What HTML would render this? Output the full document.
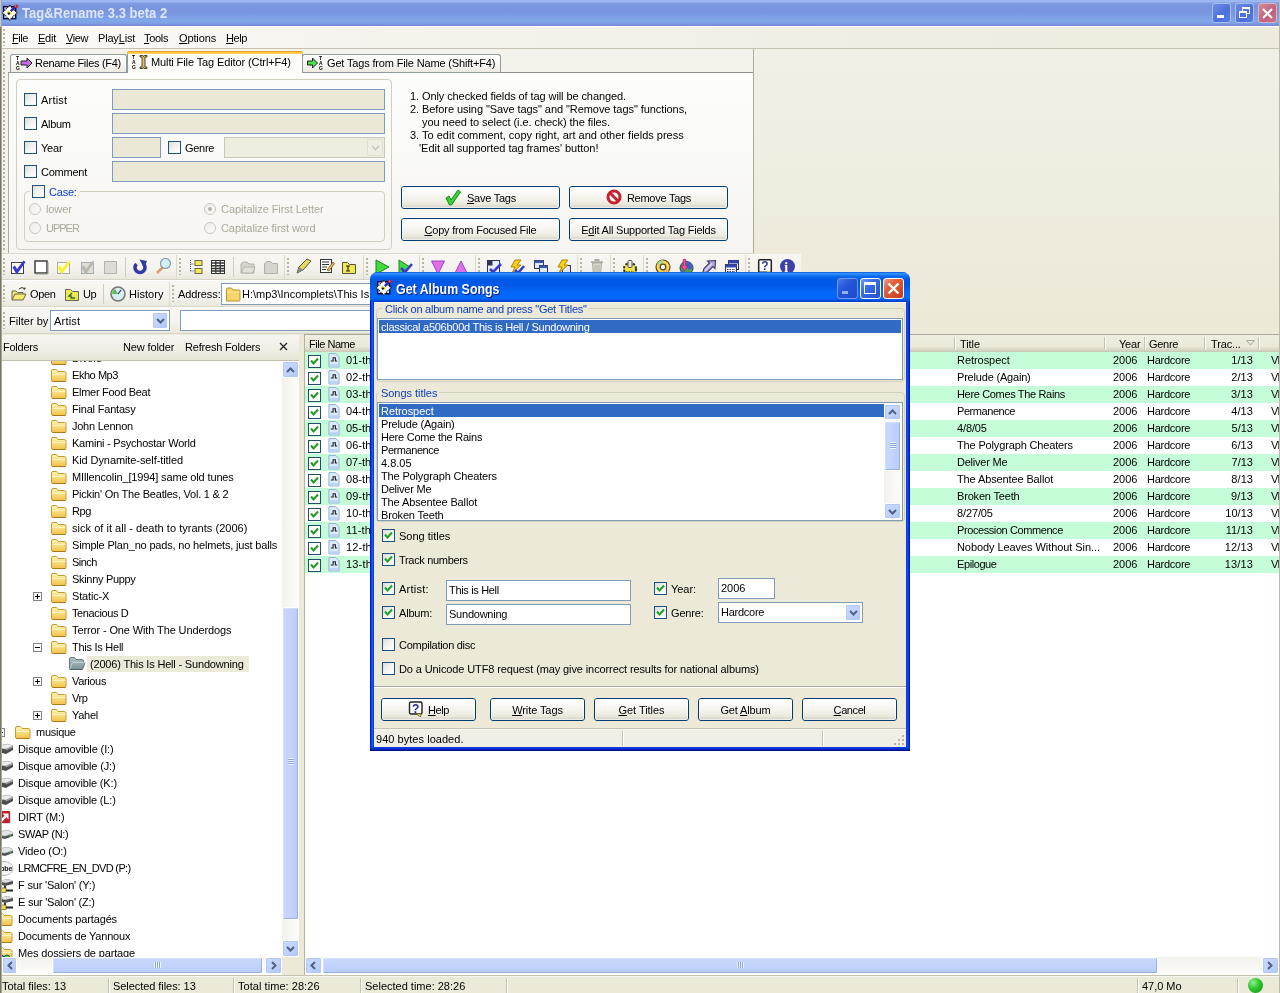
<!DOCTYPE html>
<html><head><meta charset="utf-8"><title>Tag&amp;Rename 3.3 beta 2</title>
<style>
*{box-sizing:border-box;margin:0;padding:0}
html,body{width:1280px;height:993px;overflow:hidden;background:#ece9d8}
body{position:relative;font:11px/13px "Liberation Sans",sans-serif;letter-spacing:-0.1px;color:#000;-webkit-font-smoothing:none}
.a{position:absolute}
.t{position:absolute;white-space:pre;line-height:13px;height:13px}
u{text-decoration:underline;text-underline-offset:1px}
.blue{color:#0a3cc4}
.dis{color:#aca899}
.cb{position:absolute;width:13px;height:13px;border:1px solid #1c5180;background:linear-gradient(135deg,#dcdcd7 0%,#f3f3ef 50%,#fff 100%)}
.cb svg{position:absolute;left:1px;top:1px}
.rb{position:absolute;width:12px;height:12px;border:1px solid #cac8bb;border-radius:50%;background:linear-gradient(135deg,#eeede6,#fbfbf9)}
.inp{position:absolute;border:1px solid #7f9db9;background:#fff}
.inpd{position:absolute;border:1px solid #7f9db9;background:#ebe8d7}
.btn{position:absolute;border:1px solid #003c74;border-radius:3px;background:linear-gradient(180deg,#fff 0%,#f6f5f0 45%,#eceade 80%,#d6d0c5 100%);text-align:center;line-height:23px;white-space:pre}
.btn:after{content:"";position:absolute;left:0;top:0;right:0;bottom:0;border-radius:2px;box-shadow:inset 0 0 0 1px rgba(255,255,255,.6)}
.grip{position:absolute;width:2px;background:linear-gradient(#b6b3a3 50%,transparent 50%) 0 0/2px 4px repeat-y}
.grip:after{content:'';position:absolute;left:1px;top:1px;width:2px;height:100%;background:linear-gradient(#fff 50%,transparent 50%) 0 0/2px 4px repeat-y;z-index:-1}
.sbtn{position:absolute;border:1px solid #fff;border-radius:2px;background:linear-gradient(135deg,#cbdafd 0%,#c1d3fc 50%,#b0c5f6 100%);box-shadow:inset 0 0 0 1px #b4c8f6}
.sbtn svg{position:absolute}
.thumb{position:absolute;border:1px solid #fff;border-radius:2px;box-shadow:inset -1px -1px 0 0 #98b1e4, inset 1px 1px 0 0 #d3e0fd}
.gb{position:absolute;border:1px solid #d0d0bf;border-radius:4px}
.ic{position:absolute;width:16px;height:16px}
#root{position:absolute;left:0;top:0;width:1280px;height:993px;will-change:transform}
</style></head><body><div id="root">
<!-- main window title bar (inactive) -->
<div class="a" style="left:0;top:0;width:1280px;height:26px;background:linear-gradient(180deg,#98b2ec 0%,#9fbaf4 5%,#86a2e2 11%,#7994de 21%,#7c97e0 50%,#7da0e6 65%,#80a8e8 82%,#7b9ae3 92%,#7585d0 100%)"></div>
<div class="a" style="left:0;top:26px;width:1280px;height:1px;background:#fff"></div>
<div class="a" style="left:0;top:0;width:2px;height:993px;background:linear-gradient(90deg,#77746a 0 1px,#aaa797 1px 2px)"></div>
<div class="a" style="left:0;top:0;width:1px;height:27px;background:#cfc9b6"></div><div class="a" style="left:1px;top:0;width:1px;height:26px;background:#8aa2e4"></div>
<div class="a" style="left:1279px;top:0;width:1px;height:993px;background:#bdbaab"></div>
<!-- app icon -->
<svg class="a" style="left:2px;top:4px" width="18" height="17" viewBox="0 0 18 17">
<rect x="1.700" y="2.700" width="12" height="12" fill="#cfe0fa" stroke="#0c0c34" stroke-width="1.400"/>
<path d="M7.700 1.400 L15 8.700 L7.700 16 L0.400 8.700 Z" fill="#fdfdfb" stroke="#111" stroke-width="1.100" stroke-dasharray="1.200 .8"/>
<path d="M5.500 7.500 L9.500 10" stroke="#e4da4c" stroke-width="2.400"/>
<circle cx="6.800" cy="9.600" r="1.200" fill="#111"/>
<path d="M8.800 7.200 L12.800 3.200" stroke="#2626b8" stroke-width="2.400"/>
<circle cx="14.200" cy="2.300" r="1.900" fill="#b82444"/><circle cx="13.600" cy="2" r=".6" fill="#f4c0c8"/>
</svg>
<div class="t" style="left:22px;top:5px;font:bold 14px/17px 'Liberation Sans',sans-serif;height:17px;color:#dde6f8;letter-spacing:0;transform-origin:0 0;transform:scaleX(.93)">Tag&amp;Rename 3.3 beta 2</div>
<!-- caption buttons -->
<div class="a" style="left:1212px;top:3px;width:19px;height:20px;border-radius:3px;border:1px solid #a9bdec;background:linear-gradient(135deg,#6f8ce2 0%,#4b6fdc 60%,#5b7de0 100%)"><div class="a" style="left:4px;top:11px;width:7px;height:3px;background:#fff"></div></div>
<div class="a" style="left:1235px;top:3px;width:19px;height:20px;border-radius:3px;border:1px solid #a9bdec;background:linear-gradient(135deg,#6f8ce2 0%,#4b6fdc 60%,#5b7de0 100%)">
<div class="a" style="left:6px;top:3px;width:8px;height:7px;border:1px solid #fff;border-top-width:2px"></div>
<div class="a" style="left:3px;top:7px;width:8px;height:7px;border:1px solid #fff;border-top-width:2px;background:#5172dc"></div></div>
<div class="a" style="left:1258px;top:3px;width:19px;height:20px;border-radius:3px;border:1px solid #d9b3c4;background:linear-gradient(135deg,#d08a9a 0%,#c0637a 60%,#c87488 100%)">
<svg class="a" style="left:2px;top:3px" width="13" height="13" viewBox="0 0 13 13"><path d="M2 2 L11 11 M11 2 L2 11" stroke="#fff" stroke-width="2"/></svg></div>
<!-- menu bar -->
<div class="a" style="left:2px;top:27px;width:1277px;height:21px;background:linear-gradient(90deg,#fbfaf7 0%,#f5f3ec 30%,#f0eee3 70%,#eeebde 100%)"></div>
<div class="a" style="left:2px;top:48px;width:1277px;height:1px;background:#c5c2b2"></div>
<div class="grip" style="left:3px;top:29px;height:17px"></div>
<div class="t" style="left:12px;top:32px;letter-spacing:-0.43px"><u>F</u>ile</div>
<div class="t" style="left:38px;top:32px;letter-spacing:-0.25px"><u>E</u>dit</div>
<div class="t" style="left:66px;top:32px;letter-spacing:-0.42px"><u>V</u>iew</div>
<div class="t" style="left:98px;top:32px;letter-spacing:-0.18px">Play<u>L</u>ist</div>
<div class="t" style="left:144px;top:32px;letter-spacing:-0.31px"><u>T</u>ools</div>
<div class="t" style="left:179px;top:32px;letter-spacing:-0.13px"><u>O</u>ptions</div>
<div class="t" style="left:226px;top:32px;letter-spacing:-0.43px"><u>H</u>elp</div>
<!-- top panel area -->
<div class="a" style="left:2px;top:49px;width:1277px;height:286px;background:linear-gradient(180deg,#f2f0e6 0%,#efece0 50%,#ece9d8 100%)"></div>
<div class="a" style="left:2px;top:49px;width:751px;height:205px;background:#f3f2eb"></div>
<div class="grip" style="left:3px;top:52px;height:198px"></div>
<!-- tab page -->
<div class="a" style="left:753px;top:49px;width:1px;height:205px;background:#aeab9c"></div>
<div class="a" style="left:8px;top:72px;width:745px;height:182px;border:1px solid #a9aca6;border-right:none;border-top-color:#8e8f86;background:linear-gradient(180deg,#fdfdfc 0%,#f6f5f1 100%)"></div>
<!-- tabs -->
<div class="a" style="left:10px;top:54px;width:117px;height:19px;border:1px solid #919b9c;border-bottom:none;border-radius:3px 3px 0 0;background:linear-gradient(180deg,#fff 0%,#f5f4ef 60%,#ebe9de 100%)"></div>
<div class="a" style="left:302px;top:54px;width:199px;height:19px;border:1px solid #919b9c;border-bottom:none;border-radius:3px 3px 0 0;background:linear-gradient(180deg,#fff 0%,#f5f4ef 60%,#ebe9de 100%)"></div>
<div class="a" style="left:10px;top:72px;width:117px;height:1px;background:#919b9c"></div>
<div class="a" style="left:302px;top:72px;width:199px;height:1px;background:#919b9c"></div>
<div class="a" style="left:127px;top:51px;width:176px;height:22px;border:1px solid #919b9c;border-bottom:none;border-top:none;border-radius:3px 3px 0 0;background:#fcfcfb"></div>
<div class="a" style="left:127px;top:51px;width:176px;height:3px;border-radius:3px 3px 0 0;background:linear-gradient(180deg,#e68b2c 0%,#ffc73c 50%,#ffd680 100%)"></div>
<!-- tab icons + labels -->
<svg class="a" style="left:16px;top:55px" width="18" height="16" viewBox="0 0 18 16"><text x="0" y="5" font-size="5" font-weight="bold" font-family="Liberation Sans, sans-serif">T</text><text x="0" y="10" font-size="5" font-weight="bold" font-family="Liberation Sans, sans-serif">A</text><text x="0" y="15" font-size="5" font-weight="bold" font-family="Liberation Sans, sans-serif">G</text><path d="M5 6 h6 v-3 l5 5 l-5 5 v-3 h-6 z" fill="#c86ae6" stroke="#222" stroke-width="1"/></svg>
<div class="t" style="left:35px;top:57px;letter-spacing:-0.31px">Rename Files (F4)</div>
<svg class="a" style="left:132px;top:54px" width="18" height="16" viewBox="0 0 18 16"><text x="0" y="5" font-size="5" font-weight="bold" font-family="Liberation Sans, sans-serif">T</text><text x="0" y="10" font-size="5" font-weight="bold" font-family="Liberation Sans, sans-serif">A</text><text x="0" y="15" font-size="5" font-weight="bold" font-family="Liberation Sans, sans-serif">G</text><path d="M8 1.5 h2 q1.5 0 1.5 1 q0 -1 1.5 -1 h2 v1.5 h-2 v10 h2 v1.5 h-2 q-1.500 0 -1.500 -1 q0 1 -1.500 1 h-2 v-1.500 h2 v-10 h-2 z" fill="#e8c060" stroke="#222" stroke-width=".8"/></svg>
<div class="t" style="left:151px;top:56px;letter-spacing:-0.11px">Multi File Tag Editor (Ctrl+F4)</div>
<svg class="a" style="left:307px;top:55px" width="18" height="16" viewBox="0 0 18 16"><path d="M0.500 6 h5 v-3 l5 5 l-5 5 v-3 h-5 z" fill="#4ce04c" stroke="#222" stroke-width="1"/><text x="12" y="5" font-size="5" font-weight="bold" font-family="Liberation Sans, sans-serif">T</text><text x="12" y="10" font-size="5" font-weight="bold" font-family="Liberation Sans, sans-serif">A</text><text x="12" y="15" font-size="5" font-weight="bold" font-family="Liberation Sans, sans-serif">G</text></svg>
<div class="t" style="left:327px;top:57px;letter-spacing:-0.16px">Get Tags from File Name (Shift+F4)</div>
<!-- tag editor group -->
<div class="gb" style="left:16px;top:79px;width:376px;height:171px"></div>
<div class="cb" style="left:24px;top:93px"></div><div class="t" style="left:41px;top:94px;letter-spacing:0.20px">Artist</div>
<div class="inpd" style="left:112px;top:89px;width:273px;height:21px"></div>
<div class="cb" style="left:24px;top:117px"></div><div class="t" style="left:41px;top:118px;letter-spacing:-0.32px">Album</div>
<div class="inpd" style="left:112px;top:113px;width:273px;height:21px"></div>
<div class="cb" style="left:24px;top:141px"></div><div class="t" style="left:41px;top:142px;letter-spacing:-0.21px">Year</div>
<div class="inpd" style="left:112px;top:137px;width:49px;height:21px"></div>
<div class="cb" style="left:168px;top:141px"></div><div class="t" style="left:185px;top:142px;letter-spacing:-0.29px">Genre</div>
<div class="inpd" style="left:224px;top:137px;width:161px;height:21px;border-color:#c9c7ba;background:#efeddf"></div>
<div class="a" style="left:367px;top:139px;width:16px;height:17px;border:1px solid #e1dfd3;border-radius:2px;background:#f0eee3"><svg class="a" style="left:3px;top:5px" width="9" height="6" viewBox="0 0 9 6"><path d="M1 1 L4.500 4.500 L8 1" fill="none" stroke="#c9c7ba" stroke-width="1.600"/></svg></div>
<div class="cb" style="left:24px;top:165px"></div><div class="t" style="left:41px;top:166px;letter-spacing:-0.24px">Comment</div>
<div class="inpd" style="left:112px;top:161px;width:273px;height:21px"></div>
<!-- case group -->
<div class="gb" style="left:24px;top:191px;width:361px;height:51px"></div>
<div class="a" style="left:30px;top:185px;width:50px;height:13px;background:#f8f7f4"></div>
<div class="cb" style="left:32px;top:185px"></div><div class="t blue" style="left:49px;top:186px;letter-spacing:-0.21px">Case:</div>
<div class="rb" style="left:29px;top:203px"></div><div class="t dis" style="left:46px;top:203px;letter-spacing:-0.12px">lower</div>
<div class="rb" style="left:29px;top:222px"></div><div class="t dis" style="left:46px;top:222px;letter-spacing:-1.01px">UPPER</div>
<div class="rb" style="left:204px;top:203px"><div class="a" style="left:3px;top:3px;width:4px;height:4px;border-radius:50%;background:#b5b3a6"></div></div><div class="t dis" style="left:221px;top:203px;letter-spacing:-0.06px">Capitalize First Letter</div>
<div class="rb" style="left:204px;top:222px"></div><div class="t dis" style="left:221px;top:222px;letter-spacing:-0.07px">Capitalize first word</div>
<!-- help text -->
<div class="t" style="left:410px;top:90px;letter-spacing:-0.09px">1. Only checked fields of tag will be changed.</div>
<div class="t" style="left:410px;top:103px;letter-spacing:-0.07px">2. Before using "Save tags" and "Remove tags" functions,</div>
<div class="t" style="left:410px;top:116px;letter-spacing:-0.05px">    you need to select (i.e. check) the files.</div>
<div class="t" style="left:410px;top:129px;letter-spacing:0.00px">3. To edit comment, copy right, art and other fields press</div>
<div class="t" style="left:410px;top:142px;letter-spacing:-0.04px">   'Edit all supported tag frames' button!</div>
<!-- buttons -->
<div class="btn" style="left:401px;top:186px;width:159px;height:23px;letter-spacing:-0.24px"><svg style="vertical-align:-4px;margin-right:6px" width="16" height="17" viewBox="0 0 16 17"><path d="M1 9 L4 7 L6 11 L13 1 L15.500 3 L6.500 16 L4.500 16 Z" fill="#36d236" stroke="#1a8a1a" stroke-width="1"/></svg><u>S</u>ave Tags</div>
<div class="btn" style="left:569px;top:186px;width:159px;height:23px;letter-spacing:-0.26px"><svg style="vertical-align:-3px;margin-right:5px" width="16" height="16" viewBox="0 0 16 16"><circle cx="8" cy="8" r="6" fill="#fff" stroke="#c8202c" stroke-width="3"/><path d="M4 4 L12 12" stroke="#c8202c" stroke-width="3"/></svg>Remove Tags</div>
<div class="btn" style="left:401px;top:218px;width:159px;height:23px;letter-spacing:-0.22px"><u>C</u>opy from Focused File</div>
<div class="btn" style="left:569px;top:218px;width:159px;height:23px;letter-spacing:-0.20px">E<u>d</u>it All Supported Tag Fields</div>
<!-- toolbar 1 -->
<div class="a" style="left:2px;top:254px;width:799px;height:26px;background:linear-gradient(180deg,#f8f7f3 0%,#f3f2ec 60%,#e9e7dc 100%)"></div>
<div class="a" style="left:2px;top:279px;width:900px;height:1px;background:#d8d5c6"></div>
<div class="a" style="left:2px;top:280px;width:900px;height:1px;background:#fff"></div>
<div class="a" style="left:2px;top:253px;width:752px;height:1px;background:#dcd9cb"></div>
<div class="grip" style="left:3px;top:258px;height:17px"></div>
<div class="grip" style="left:179px;top:258px;height:17px"></div>
<div class="grip" style="left:287px;top:258px;height:17px"></div>
<div class="grip" style="left:366px;top:258px;height:17px"></div>
<div class="grip" style="left:422px;top:258px;height:17px"></div>
<div class="grip" style="left:478px;top:258px;height:17px"></div>
<div class="grip" style="left:580px;top:258px;height:17px"></div>
<div class="grip" style="left:613px;top:258px;height:17px"></div>
<div class="grip" style="left:646px;top:258px;height:17px"></div>
<div class="grip" style="left:748px;top:258px;height:17px"></div>
<div class="a" style="left:125px;top:257px;width:1px;height:20px;background:#cfccbd"></div>
<div class="a" style="left:233px;top:257px;width:1px;height:20px;background:#cfccbd"></div>
<div class="a" style="left:176px;top:255px;width:1px;height:24px;background:#dddacb"></div>
<div class="a" style="left:284px;top:255px;width:1px;height:24px;background:#dddacb"></div>
<div class="a" style="left:363px;top:255px;width:1px;height:24px;background:#dddacb"></div>
<div class="a" style="left:419px;top:255px;width:1px;height:24px;background:#dddacb"></div>
<div class="a" style="left:475px;top:255px;width:1px;height:24px;background:#dddacb"></div>
<div class="a" style="left:577px;top:255px;width:1px;height:24px;background:#dddacb"></div>
<div class="a" style="left:610px;top:255px;width:1px;height:24px;background:#dddacb"></div>
<div class="a" style="left:643px;top:255px;width:1px;height:24px;background:#dddacb"></div>
<div class="a" style="left:745px;top:255px;width:1px;height:24px;background:#dddacb"></div>
<!-- tb1 icons -->
<svg class="ic" style="left:10px;top:259px" viewBox="0 0 16 16"><rect x="1.500" y="3.500" width="12" height="11" fill="#fff" stroke="#444" /><path d="M2.500 8.500 L5 6.500 L7 10 L13.500 1.500 L15.500 3 L7.500 14.500 L6 14.500 Z" fill="#3a3ad4"/></svg>
<svg class="ic" style="left:33px;top:259px" viewBox="0 0 16 16"><rect x="2" y="2" width="12" height="12" fill="#fff" stroke="#333" stroke-width="1.400"/><path d="M3 15 h12 v-12" fill="none" stroke="#999" stroke-width="1"/></svg>
<svg class="ic" style="left:55px;top:259px" viewBox="0 0 16 16"><rect x="2.500" y="3.500" width="12" height="11" fill="#fdfde8" stroke="#aaa"/><path d="M2.500 8.500 L5 6.500 L7 10 L13.500 1.500 L15.500 3 L7.500 14.500 L6 14.500 Z" fill="#f4f430"/></svg>
<svg class="ic" style="left:79px;top:259px" viewBox="0 0 16 16"><rect x="2.500" y="3.500" width="12" height="11" fill="#deddd6" stroke="#aaa"/><path d="M2.500 8.500 L5 6.500 L7 10 L13.500 1.500 L15.500 3 L7.500 14.500 L6 14.500 Z" fill="#b8b7ae"/></svg>
<svg class="ic" style="left:102px;top:259px" viewBox="0 0 16 16"><rect x="2.500" y="2.500" width="12" height="12" fill="#dcdbd5" stroke="#b5b4ac"/></svg>
<svg class="ic" style="left:132px;top:259px" viewBox="0 0 16 16"><path d="M4.500 5 A5 5 0 1 0 11.500 5" fill="none" stroke="#3238a8" stroke-width="3.600"/><path d="M7.500 0.500 L15 2 L12 9 Z" fill="#3238a8"/></svg>
<svg class="ic" style="left:155px;top:258px" viewBox="0 0 16 16"><path d="M2 15 L8 9" stroke="#d8a070" stroke-width="2.600"/><circle cx="10.500" cy="5.500" r="5" fill="#d4f0fa" stroke="#8a9ab0" stroke-width="1.200"/></svg>
<svg class="ic" style="left:188px;top:259px" viewBox="0 0 16 16"><path d="M2.500 1 v11 M2.500 5 h4 M2.500 12 h4" stroke="#555" stroke-dasharray="1 1" fill="none"/><rect x="7" y="1.500" width="7" height="5" fill="#f0e850" stroke="#665"/><rect x="7" y="9.500" width="7" height="5" fill="#f0e850" stroke="#665"/></svg>
<svg class="ic" style="left:210px;top:259px" viewBox="0 0 16 16"><rect x="1.500" y="1.500" width="13" height="13" fill="#fff" stroke="#333"/><path d="M1 4 h14 M1 6.700 h14 M1 9.400 h14 M1 12.100 h14" stroke="#333" stroke-width="1.500"/><path d="M5.800 1 v14 M10.200 1 v14" stroke="#333" stroke-width="1.200"/></svg>
<svg class="ic" style="left:240px;top:259px" viewBox="0 0 16 16"><path d="M1 14 v-9 l2 -2 h4 l2 2 h5 v9 z" fill="#d6d4cc" stroke="#b2b0a6"/><path d="M1 14 l3 -6 h11 l-2 6 z" fill="#e2e0d8" stroke="#b2b0a6"/></svg>
<svg class="ic" style="left:263px;top:259px" viewBox="0 0 16 16"><path d="M1.500 14.500 v-10 l2 -2 h4 l2 2 h5 v10 z" fill="#d6d4cc" stroke="#b2b0a6"/></svg>
<svg class="ic" style="left:296px;top:258px" viewBox="0 0 16 16"><path d="M1 15 L3 9 L11 1 L15 3 L7 12 Z" fill="#e8d860" stroke="#554" stroke-width="1"/><path d="M1 15 L3 9 L7 12 Z" fill="#888"/></svg>
<svg class="ic" style="left:319px;top:258px" viewBox="0 0 16 16"><rect x="1.500" y="1.500" width="11" height="13" fill="#fff" stroke="#333"/><path d="M3 4 h7 M3 6.500 h7 M3 9 h5 M3 11.500 h4" stroke="#333"/><path d="M8 12 L14 4 L15.500 5.500 L10 13 Z" fill="#f0c040" stroke="#543" stroke-width=".7"/></svg>
<svg class="ic" style="left:341px;top:259px" viewBox="0 0 16 16"><path d="M1.500 14.500 v-11 h5 l2 2 h6 v9 z" fill="#f0e850" stroke="#554"/><path d="M5 7 h4 M7 7 v5 M5 12 h4" stroke="#222" stroke-width="1.200"/></svg>
<svg class="ic" style="left:374px;top:259px" viewBox="0 0 16 16"><path d="M2 1 L15 8 L2 15 Z" fill="#40d840" stroke="#1a8a1a"/></svg>
<svg class="ic" style="left:397px;top:259px" viewBox="0 0 16 16"><path d="M2 1 L13 8 L2 15 Z" fill="#40d840" stroke="#1a8a1a"/><path d="M4 9 L8 13 L15 5" fill="none" stroke="#3a3ad0" stroke-width="2.600"/></svg>
<svg class="ic" style="left:430px;top:259px" viewBox="0 0 16 16"><path d="M1.500 2 H14.500 L8 15 Z" fill="#e070e8" stroke="#94c"/></svg>
<svg class="ic" style="left:453px;top:259px" viewBox="0 0 16 16"><path d="M1.500 15 H14.500 L8 2 Z" fill="#e070e8" stroke="#94c"/></svg>
<svg class="ic" style="left:486px;top:259px" viewBox="0 0 16 16"><rect x="1.500" y="1.500" width="12" height="12" fill="#e8eefc" stroke="#335"/><rect x="1.500" y="1.500" width="5" height="5" fill="#335"/><path d="M4 10 L7 13 L15 5" fill="none" stroke="#3a3ad0" stroke-width="2.600"/></svg>
<svg class="ic" style="left:509px;top:259px" viewBox="0 0 16 16"><path d="M6 1 L12 1 L8 6 L12 6 L3 14 L6 8 L2 8 Z" fill="#f8d020" stroke="#a80"/><path d="M6 11 L9 14 L15 7" fill="none" stroke="#3a3ad0" stroke-width="2.600"/></svg>
<svg class="ic" style="left:533px;top:259px" viewBox="0 0 16 16"><rect x="1.500" y="1.500" width="9" height="8" fill="#dde8fa" stroke="#335"/><rect x="1.500" y="1.500" width="9" height="2.500" fill="#3a55b0"/><rect x="6.500" y="6.500" width="8" height="8" fill="#dde8fa" stroke="#335"/><rect x="6.500" y="6.500" width="8" height="2.500" fill="#3a55b0"/></svg>
<svg class="ic" style="left:556px;top:259px" viewBox="0 0 16 16"><rect x="6.500" y="6.500" width="8" height="8" fill="#dde8fa" stroke="#335"/><path d="M6 1 L12 1 L8 6 L12 6 L3 14 L6 8 L2 8 Z" fill="#f8d020" stroke="#a80"/></svg>
<svg class="ic" style="left:589px;top:258px" viewBox="0 0 16 16"><path d="M3.500 5 h9 l-.8 10.500 h-7.400 z" fill="#d8d6ce" stroke="#aeaca2"/><path d="M2 4.200 h12 M5.500 2 h5" stroke="#aeaca2" stroke-width="1.800"/><path d="M6 7 v7 M8 7 v7 M10 7 v7" stroke="#b4b2a8"/></svg>
<svg class="ic" style="left:622px;top:259px" viewBox="0 0 16 16"><circle cx="8" cy="10" r="6" fill="#f0e448" stroke="#3a3a20" stroke-dasharray="2.400 1.400" stroke-width="2.200"/><circle cx="8" cy="10" r="4.800" fill="#f0e448"/><rect x="6" y="1.500" width="4" height="7" rx="1" fill="#e8e8e8" stroke="#555"/><path d="M4 12.500 h8" stroke="#7a7420" stroke-dasharray="1.500 1"/></svg>
<svg class="ic" style="left:655px;top:259px" viewBox="0 0 16 16"><circle cx="8" cy="8" r="7" fill="#f6d458" stroke="#5a4a18" stroke-width="1.200"/><path d="M8 8 L2 4.500 A7 7 0 0 1 8 1 Z" fill="#a8dc88"/><path d="M8 8 L14 11.500 A7 7 0 0 1 8 15 Z" fill="#f4b860"/><circle cx="8" cy="8" r="2.800" fill="#f4f4f4" stroke="#5a4a18" stroke-width="1.200"/></svg>
<svg class="ic" style="left:678px;top:259px" viewBox="0 0 16 16"><circle cx="8.500" cy="9" r="6.500" fill="#4aa84a" stroke="#223a5a"/><path d="M8.500 2.500 a6.500 6.500 0 0 1 6.500 6.500 l-4 2 l-2.500 -3 z" fill="#4460c8"/><path d="M3 12 l3 1 l1 2.400" fill="none" stroke="#4460c8" stroke-width="2"/><path d="M5.200 0.500 v6.500 h-2.400 l3.700 5 l3.700 -5 h-2.400 v-6.500 z" fill="#ee50a0" stroke="#a02468" stroke-width=".8"/></svg>
<svg class="ic" style="left:701px;top:259px" viewBox="0 0 16 16"><path d="M1.500 14.500 L3 9.500 L8.500 4 L6.500 2 L14.500 1.500 L14 9.500 L12 7.500 L6.500 13 Z" fill="#b4a4ea" stroke="#3c3c5c" stroke-width="1.100"/><path d="M4 11.500 L11 4.500" stroke="#dcd4f8" stroke-width="1.400"/></svg>
<svg class="ic" style="left:724px;top:259px" viewBox="0 0 16 16"><rect x="4.500" y="1.500" width="10" height="9" fill="#fff" stroke="#336"/><rect x="4.500" y="1.500" width="10" height="3" fill="#3346b0"/><rect x="1.500" y="5.500" width="11" height="9" fill="#fff" stroke="#336"/><rect x="1.500" y="5.500" width="11" height="3" fill="#3346b0"/><path d="M3 10.500 h8 M3 12.500 h8" stroke="#336" stroke-dasharray="1.500 1"/></svg>
<svg class="ic" style="left:757px;top:258px" viewBox="0 0 16 16"><rect x="1.700" y="1.700" width="12.600" height="12.600" rx="1" fill="#fff" stroke="#222" stroke-width="1.500"/><text x="4.300" y="12.300" font-size="12" font-weight="bold" fill="#34349c" font-family="Liberation Sans, sans-serif">?</text><path d="M9.500 13.500 l3 2.500 l.5 -3 z" fill="#f4ec60"/></svg>
<svg class="ic" style="left:779px;top:258px" viewBox="0 0 16 16"><circle cx="8.500" cy="8.500" r="7.500" fill="#3c40a8"/><text x="5.300" y="14" font-size="14" font-weight="bold" fill="#fff" font-family="Liberation Serif, serif">i</text></svg>
<!-- toolbar 2 -->
<div class="a" style="left:2px;top:281px;width:900px;height:26px;background:linear-gradient(180deg,#f8f7f3 0%,#f3f2ec 60%,#e9e7dc 100%)"></div>
<div class="a" style="left:2px;top:306px;width:900px;height:1px;background:#d8d5c6"></div>
<div class="a" style="left:2px;top:307px;width:900px;height:1px;background:#fff"></div>
<div class="grip" style="left:3px;top:285px;height:17px"></div>
<div class="grip" style="left:172px;top:285px;height:17px"></div>
<div class="a" style="left:169px;top:282px;width:1px;height:24px;background:#dddacb"></div>
<div class="a" style="left:103px;top:284px;width:1px;height:20px;background:#cfccbd"></div>
<svg class="ic" style="left:11px;top:286px" viewBox="0 0 16 16"><path d="M1 14 v-9 h4 l1.500 1.500 h5.500 v2" fill="#f4ec70" stroke="#665"/><path d="M1 14 l3 -6 h11 l-3 6 z" fill="#f4ec70" stroke="#665"/><path d="M8 3 q3 -3 6 0 l-1.500 0 m1.500 0 l0 -1.500" fill="none" stroke="#333"/></svg>
<div class="t" style="left:30px;top:288px;letter-spacing:-0.33px">Open</div>
<svg class="ic" style="left:64px;top:286px" viewBox="0 0 16 16"><path d="M1.500 14.500 v-11 h5 l2 2 h6 v9 z" fill="#f0e850" stroke="#665"/><path d="M8 7 l-3 3 h2 v2 h4" fill="none" stroke="#363" stroke-width="1.300"/></svg>
<div class="t" style="left:83px;top:288px;letter-spacing:-0.32px">Up</div>
<svg class="ic" style="left:110px;top:286px" viewBox="0 0 16 16"><circle cx="8" cy="8" r="7" fill="#d8eef0" stroke="#777" stroke-width="1.600"/><path d="M8 8 L2 8 A6 6 0 0 1 5 3 Z" fill="#50c050"/><path d="M8 8 L11 4" stroke="#335" stroke-width="1.200"/></svg>
<div class="t" style="left:129px;top:288px;letter-spacing:0.03px">History</div>
<div class="t" style="left:178px;top:288px;letter-spacing:-0.10px">Address:</div>
<div class="inp" style="left:221px;top:283px;width:671px;height:22px"></div>
<svg class="ic" style="left:225px;top:286px" viewBox="0 0 16 16"><path d="M1.500 14 v-11 q0 -1 1 -1 h4 l1.500 2 h6 q1 0 1 1 v9 q0 1 -1 1 h-12.500z" fill="#f6d66a" stroke="#b8902a"/><path d="M2 6 h12.500" stroke="#fbe9a0"/></svg>
<div class="t" style="left:242px;top:288px;letter-spacing:0.00px">H:\mp3\Incomplets\This Is</div>
<!-- filter bar -->
<div class="a" style="left:2px;top:308px;width:900px;height:26px;background:linear-gradient(180deg,#f8f7f3 0%,#f3f2ec 60%,#e9e7dc 100%)"></div>
<div class="a" style="left:2px;top:333px;width:900px;height:1px;background:#d8d5c6"></div>
<div class="grip" style="left:3px;top:312px;height:17px"></div>
<div class="t" style="left:9px;top:315px;letter-spacing:0.03px">Filter by</div>
<div class="inp" style="left:50px;top:310px;width:120px;height:21px"></div>
<div class="t" style="left:54px;top:315px;letter-spacing:0.20px">Artist</div>
<div class="sbtn" style="left:152px;top:312px;width:16px;height:17px"><svg style="left:3px;top:5px" width="9" height="6" viewBox="0 0 9 6"><path d="M1 1 L4.500 4.500 L8 1" fill="none" stroke="#4d6185" stroke-width="2"/></svg></div>
<div class="inp" style="left:180px;top:310px;width:712px;height:21px"></div>
<!-- folders panel -->
<svg width="0" height="0" style="position:absolute"><defs><linearGradient id="fg" x1="0" y1="0" x2="0" y2="1"><stop offset="0" stop-color="#fef6b8"/><stop offset="1" stop-color="#f2c248"/></linearGradient><linearGradient id="gg" x1="0" y1="0" x2="0" y2="1"><stop offset="0" stop-color="#b4c3c6"/><stop offset="1" stop-color="#7c9296"/></linearGradient></defs></svg>
<div class="a" style="left:2px;top:360px;width:297px;height:615px;background:#fff;overflow:hidden" id="tree">
<svg class="a" style="left:49px;top:-8px" width="16" height="13" viewBox="0 0 16 13"><path d="M.5 11 V2 q0-1.500 1.500-1.500 h3 q1 0 1.500 1 l.5 1 h6.500 q1.500 0 1.500 1.500 v7 q0 1.500-1.500 1.500 h-11.500 q-1.500 0-1.500-1.500z" fill="url(#fg)" stroke="#c59a35"/><path d="M1.500 5.500 h13" stroke="#fff8d0" opacity=".8"/><path d="M1.500 12.500 h13" stroke="#a67a1e"/></svg>
<div class="t" style="left:70px;top:-8px;letter-spacing:-0.22px">Divers</div>
<svg class="a" style="left:49px;top:9px" width="16" height="13" viewBox="0 0 16 13"><path d="M.5 11 V2 q0-1.500 1.500-1.500 h3 q1 0 1.500 1 l.5 1 h6.500 q1.500 0 1.500 1.500 v7 q0 1.500-1.500 1.500 h-11.500 q-1.500 0-1.500-1.500z" fill="url(#fg)" stroke="#c59a35"/><path d="M1.500 5.500 h13" stroke="#fff8d0" opacity=".8"/><path d="M1.500 12.500 h13" stroke="#a67a1e"/></svg>
<div class="t" style="left:70px;top:9px;letter-spacing:-0.45px">Ekho Mp3</div>
<svg class="a" style="left:49px;top:26px" width="16" height="13" viewBox="0 0 16 13"><path d="M.5 11 V2 q0-1.500 1.500-1.500 h3 q1 0 1.500 1 l.5 1 h6.500 q1.500 0 1.500 1.500 v7 q0 1.500-1.500 1.500 h-11.500 q-1.500 0-1.500-1.500z" fill="url(#fg)" stroke="#c59a35"/><path d="M1.500 5.500 h13" stroke="#fff8d0" opacity=".8"/><path d="M1.500 12.500 h13" stroke="#a67a1e"/></svg>
<div class="t" style="left:70px;top:26px;letter-spacing:-0.29px">Elmer Food Beat</div>
<svg class="a" style="left:49px;top:43px" width="16" height="13" viewBox="0 0 16 13"><path d="M.5 11 V2 q0-1.500 1.500-1.500 h3 q1 0 1.500 1 l.5 1 h6.500 q1.500 0 1.500 1.500 v7 q0 1.500-1.500 1.500 h-11.500 q-1.500 0-1.500-1.500z" fill="url(#fg)" stroke="#c59a35"/><path d="M1.500 5.500 h13" stroke="#fff8d0" opacity=".8"/><path d="M1.500 12.500 h13" stroke="#a67a1e"/></svg>
<div class="t" style="left:70px;top:43px;letter-spacing:-0.20px">Final Fantasy</div>
<svg class="a" style="left:49px;top:60px" width="16" height="13" viewBox="0 0 16 13"><path d="M.5 11 V2 q0-1.500 1.500-1.500 h3 q1 0 1.500 1 l.5 1 h6.500 q1.500 0 1.500 1.500 v7 q0 1.500-1.500 1.500 h-11.500 q-1.500 0-1.500-1.500z" fill="url(#fg)" stroke="#c59a35"/><path d="M1.500 5.500 h13" stroke="#fff8d0" opacity=".8"/><path d="M1.500 12.500 h13" stroke="#a67a1e"/></svg>
<div class="t" style="left:70px;top:60px;letter-spacing:-0.25px">John Lennon</div>
<svg class="a" style="left:49px;top:77px" width="16" height="13" viewBox="0 0 16 13"><path d="M.5 11 V2 q0-1.500 1.500-1.500 h3 q1 0 1.500 1 l.5 1 h6.500 q1.500 0 1.500 1.500 v7 q0 1.500-1.500 1.500 h-11.500 q-1.500 0-1.500-1.500z" fill="url(#fg)" stroke="#c59a35"/><path d="M1.500 5.500 h13" stroke="#fff8d0" opacity=".8"/><path d="M1.500 12.500 h13" stroke="#a67a1e"/></svg>
<div class="t" style="left:70px;top:77px;letter-spacing:-0.23px">Kamini - Psychostar World</div>
<svg class="a" style="left:49px;top:94px" width="16" height="13" viewBox="0 0 16 13"><path d="M.5 11 V2 q0-1.500 1.500-1.500 h3 q1 0 1.500 1 l.5 1 h6.500 q1.500 0 1.500 1.500 v7 q0 1.500-1.500 1.500 h-11.500 q-1.500 0-1.500-1.500z" fill="url(#fg)" stroke="#c59a35"/><path d="M1.500 5.500 h13" stroke="#fff8d0" opacity=".8"/><path d="M1.500 12.500 h13" stroke="#a67a1e"/></svg>
<div class="t" style="left:70px;top:94px;letter-spacing:-0.09px">Kid Dynamite-self-titled</div>
<svg class="a" style="left:49px;top:111px" width="16" height="13" viewBox="0 0 16 13"><path d="M.5 11 V2 q0-1.500 1.500-1.500 h3 q1 0 1.500 1 l.5 1 h6.500 q1.500 0 1.500 1.500 v7 q0 1.500-1.500 1.500 h-11.500 q-1.500 0-1.500-1.500z" fill="url(#fg)" stroke="#c59a35"/><path d="M1.500 5.500 h13" stroke="#fff8d0" opacity=".8"/><path d="M1.500 12.500 h13" stroke="#a67a1e"/></svg>
<div class="t" style="left:70px;top:111px;letter-spacing:-0.14px">MIllencolin_[1994] same old tunes</div>
<svg class="a" style="left:49px;top:128px" width="16" height="13" viewBox="0 0 16 13"><path d="M.5 11 V2 q0-1.500 1.500-1.500 h3 q1 0 1.500 1 l.5 1 h6.500 q1.500 0 1.500 1.500 v7 q0 1.500-1.500 1.500 h-11.500 q-1.500 0-1.500-1.500z" fill="url(#fg)" stroke="#c59a35"/><path d="M1.500 5.500 h13" stroke="#fff8d0" opacity=".8"/><path d="M1.500 12.500 h13" stroke="#a67a1e"/></svg>
<div class="t" style="left:70px;top:128px;letter-spacing:-0.22px">Pickin' On The Beatles, Vol. 1 &amp; 2</div>
<svg class="a" style="left:49px;top:145px" width="16" height="13" viewBox="0 0 16 13"><path d="M.5 11 V2 q0-1.500 1.500-1.500 h3 q1 0 1.500 1 l.5 1 h6.500 q1.500 0 1.500 1.500 v7 q0 1.500-1.500 1.500 h-11.500 q-1.500 0-1.500-1.500z" fill="url(#fg)" stroke="#c59a35"/><path d="M1.500 5.500 h13" stroke="#fff8d0" opacity=".8"/><path d="M1.500 12.500 h13" stroke="#a67a1e"/></svg>
<div class="t" style="left:70px;top:145px;letter-spacing:-0.35px">Rpg</div>
<svg class="a" style="left:49px;top:162px" width="16" height="13" viewBox="0 0 16 13"><path d="M.5 11 V2 q0-1.500 1.500-1.500 h3 q1 0 1.500 1 l.5 1 h6.500 q1.500 0 1.500 1.500 v7 q0 1.500-1.500 1.500 h-11.500 q-1.500 0-1.500-1.500z" fill="url(#fg)" stroke="#c59a35"/><path d="M1.500 5.500 h13" stroke="#fff8d0" opacity=".8"/><path d="M1.500 12.500 h13" stroke="#a67a1e"/></svg>
<div class="t" style="left:70px;top:162px;letter-spacing:0.03px">sick of it all - death to tyrants (2006)</div>
<svg class="a" style="left:49px;top:179px" width="16" height="13" viewBox="0 0 16 13"><path d="M.5 11 V2 q0-1.500 1.500-1.500 h3 q1 0 1.500 1 l.5 1 h6.500 q1.500 0 1.500 1.500 v7 q0 1.500-1.500 1.500 h-11.500 q-1.500 0-1.500-1.500z" fill="url(#fg)" stroke="#c59a35"/><path d="M1.500 5.500 h13" stroke="#fff8d0" opacity=".8"/><path d="M1.500 12.500 h13" stroke="#a67a1e"/></svg>
<div class="t" style="left:70px;top:179px;letter-spacing:-0.18px">Simple Plan_no pads, no helmets, just balls</div>
<svg class="a" style="left:49px;top:196px" width="16" height="13" viewBox="0 0 16 13"><path d="M.5 11 V2 q0-1.500 1.500-1.500 h3 q1 0 1.500 1 l.5 1 h6.500 q1.500 0 1.500 1.500 v7 q0 1.500-1.500 1.500 h-11.500 q-1.500 0-1.500-1.500z" fill="url(#fg)" stroke="#c59a35"/><path d="M1.500 5.500 h13" stroke="#fff8d0" opacity=".8"/><path d="M1.500 12.500 h13" stroke="#a67a1e"/></svg>
<div class="t" style="left:70px;top:196px;letter-spacing:-0.51px">Sinch</div>
<svg class="a" style="left:49px;top:213px" width="16" height="13" viewBox="0 0 16 13"><path d="M.5 11 V2 q0-1.500 1.500-1.500 h3 q1 0 1.500 1 l.5 1 h6.500 q1.500 0 1.500 1.500 v7 q0 1.500-1.500 1.500 h-11.500 q-1.500 0-1.500-1.500z" fill="url(#fg)" stroke="#c59a35"/><path d="M1.500 5.500 h13" stroke="#fff8d0" opacity=".8"/><path d="M1.500 12.500 h13" stroke="#a67a1e"/></svg>
<div class="t" style="left:70px;top:213px;letter-spacing:-0.31px">Skinny Puppy</div>
<svg class="a" style="left:49px;top:230px" width="16" height="13" viewBox="0 0 16 13"><path d="M.5 11 V2 q0-1.500 1.500-1.500 h3 q1 0 1.500 1 l.5 1 h6.500 q1.500 0 1.500 1.500 v7 q0 1.500-1.500 1.500 h-11.500 q-1.500 0-1.500-1.500z" fill="url(#fg)" stroke="#c59a35"/><path d="M1.500 5.500 h13" stroke="#fff8d0" opacity=".8"/><path d="M1.500 12.500 h13" stroke="#a67a1e"/></svg>
<div class="a" style="left:31px;top:232px;width:9px;height:9px;border:1px solid #848484;background:#fff"><div class="a" style="left:1px;top:3px;width:5px;height:1px;background:#000"></div><div class="a" style="left:3px;top:1px;width:1px;height:5px;background:#000"></div></div>
<div class="t" style="left:70px;top:230px;letter-spacing:-0.16px">Static-X</div>
<svg class="a" style="left:49px;top:247px" width="16" height="13" viewBox="0 0 16 13"><path d="M.5 11 V2 q0-1.500 1.500-1.500 h3 q1 0 1.500 1 l.5 1 h6.500 q1.500 0 1.500 1.500 v7 q0 1.500-1.500 1.500 h-11.500 q-1.500 0-1.500-1.500z" fill="url(#fg)" stroke="#c59a35"/><path d="M1.500 5.500 h13" stroke="#fff8d0" opacity=".8"/><path d="M1.500 12.500 h13" stroke="#a67a1e"/></svg>
<div class="t" style="left:70px;top:247px;letter-spacing:-0.38px">Tenacious D</div>
<svg class="a" style="left:49px;top:264px" width="16" height="13" viewBox="0 0 16 13"><path d="M.5 11 V2 q0-1.500 1.500-1.500 h3 q1 0 1.500 1 l.5 1 h6.500 q1.500 0 1.500 1.500 v7 q0 1.500-1.500 1.500 h-11.500 q-1.500 0-1.500-1.500z" fill="url(#fg)" stroke="#c59a35"/><path d="M1.500 5.500 h13" stroke="#fff8d0" opacity=".8"/><path d="M1.500 12.500 h13" stroke="#a67a1e"/></svg>
<div class="t" style="left:70px;top:264px;letter-spacing:-0.12px">Terror - One With The Underdogs</div>
<svg class="a" style="left:49px;top:281px" width="16" height="13" viewBox="0 0 16 13"><path d="M.5 11 V2 q0-1.500 1.500-1.500 h3 q1 0 1.500 1 l.5 1 h6.500 q1.500 0 1.500 1.500 v7 q0 1.500-1.500 1.500 h-11.500 q-1.500 0-1.500-1.500z" fill="url(#fg)" stroke="#c59a35"/><path d="M1.500 5.500 h13" stroke="#fff8d0" opacity=".8"/><path d="M1.500 12.500 h13" stroke="#a67a1e"/></svg>
<div class="a" style="left:31px;top:283px;width:9px;height:9px;border:1px solid #848484;background:#fff"><div class="a" style="left:1px;top:3px;width:5px;height:1px;background:#000"></div></div>
<div class="t" style="left:70px;top:281px;letter-spacing:-0.26px">This Is Hell</div>
<div class="a" style="left:85px;top:296px;width:162px;height:16px;background:#ece9d8"></div>
<svg class="a" style="left:67px;top:297px" width="17" height="13" viewBox="0 0 17 13"><path d="M.5 11 V2 q0-1.500 1.500-1.500 h3 q1 0 1.500 1 l.5 1 h6 q1.500 0 1.500 1.500 v1.500 h1.500 l-2 6 q-.5 1-1.500 1 h-11 q-1.500 0-1.500-1.500z" fill="url(#gg)" stroke="#66797d"/><path d="M1 11.500 l2.500-6 h12.500" fill="none" stroke="#c5d0d2"/><path d="M1.500 12.500 h12" stroke="#4e6266"/></svg>
<div class="t" style="left:88px;top:298px;letter-spacing:-0.18px">(2006) This Is Hell - Sundowning</div>
<svg class="a" style="left:49px;top:315px" width="16" height="13" viewBox="0 0 16 13"><path d="M.5 11 V2 q0-1.500 1.500-1.500 h3 q1 0 1.500 1 l.5 1 h6.500 q1.500 0 1.500 1.500 v7 q0 1.500-1.500 1.500 h-11.500 q-1.500 0-1.500-1.500z" fill="url(#fg)" stroke="#c59a35"/><path d="M1.500 5.500 h13" stroke="#fff8d0" opacity=".8"/><path d="M1.500 12.500 h13" stroke="#a67a1e"/></svg>
<div class="a" style="left:31px;top:317px;width:9px;height:9px;border:1px solid #848484;background:#fff"><div class="a" style="left:1px;top:3px;width:5px;height:1px;background:#000"></div><div class="a" style="left:3px;top:1px;width:1px;height:5px;background:#000"></div></div>
<div class="t" style="left:70px;top:315px;letter-spacing:-0.35px">Various</div>
<svg class="a" style="left:49px;top:332px" width="16" height="13" viewBox="0 0 16 13"><path d="M.5 11 V2 q0-1.500 1.500-1.500 h3 q1 0 1.500 1 l.5 1 h6.500 q1.500 0 1.500 1.500 v7 q0 1.500-1.500 1.500 h-11.500 q-1.500 0-1.500-1.500z" fill="url(#fg)" stroke="#c59a35"/><path d="M1.500 5.500 h13" stroke="#fff8d0" opacity=".8"/><path d="M1.500 12.500 h13" stroke="#a67a1e"/></svg>
<div class="t" style="left:70px;top:332px;letter-spacing:-0.45px">Vrp</div>
<svg class="a" style="left:49px;top:349px" width="16" height="13" viewBox="0 0 16 13"><path d="M.5 11 V2 q0-1.500 1.500-1.500 h3 q1 0 1.500 1 l.5 1 h6.500 q1.500 0 1.500 1.500 v7 q0 1.500-1.500 1.500 h-11.500 q-1.500 0-1.500-1.500z" fill="url(#fg)" stroke="#c59a35"/><path d="M1.500 5.500 h13" stroke="#fff8d0" opacity=".8"/><path d="M1.500 12.500 h13" stroke="#a67a1e"/></svg>
<div class="a" style="left:31px;top:351px;width:9px;height:9px;border:1px solid #848484;background:#fff"><div class="a" style="left:1px;top:3px;width:5px;height:1px;background:#000"></div><div class="a" style="left:3px;top:1px;width:1px;height:5px;background:#000"></div></div>
<div class="t" style="left:70px;top:349px;letter-spacing:-0.26px">Yahel</div>
<svg class="a" style="left:13px;top:366px" width="16" height="13" viewBox="0 0 16 13"><path d="M.5 11 V2 q0-1.500 1.500-1.500 h3 q1 0 1.500 1 l.5 1 h6.500 q1.500 0 1.500 1.500 v7 q0 1.500-1.500 1.500 h-11.500 q-1.500 0-1.500-1.500z" fill="url(#fg)" stroke="#c59a35"/><path d="M1.500 5.500 h13" stroke="#fff8d0" opacity=".8"/><path d="M1.500 12.500 h13" stroke="#a67a1e"/></svg>
<div class="a" style="left:-6px;top:368px;width:9px;height:9px;border:1px solid #848484;background:#fff"><div class="a" style="left:1px;top:3px;width:5px;height:1px;background:#000"></div><div class="a" style="left:3px;top:1px;width:1px;height:5px;background:#000"></div></div>
<div class="t" style="left:34px;top:366px;letter-spacing:-0.27px">musique</div>
<svg class="a" style="left:-5px;top:382px" width="17" height="15" viewBox="0 0 17 15"><path d="M0 4 L11 2 L16 4 L16 8 L9 12 L0 10 Z" fill="#4c4c4c"/><path d="M0 4 L11 2 L16 4 L9 7 L0 6 Z" fill="#ececec" stroke="#bdbdbd" stroke-width=".6"/><path d="M9 7 L16 4 V5.500 L9 8.500Z" fill="#9a9a9a"/></svg>
<div class="t" style="left:16px;top:383px;letter-spacing:-0.11px">Disque amovible (I:)</div>
<svg class="a" style="left:-5px;top:399px" width="17" height="15" viewBox="0 0 17 15"><path d="M0 4 L11 2 L16 4 L16 8 L9 12 L0 10 Z" fill="#4c4c4c"/><path d="M0 4 L11 2 L16 4 L9 7 L0 6 Z" fill="#ececec" stroke="#bdbdbd" stroke-width=".6"/><path d="M9 7 L16 4 V5.500 L9 8.500Z" fill="#9a9a9a"/></svg>
<div class="t" style="left:16px;top:400px;letter-spacing:-0.14px">Disque amovible (J:)</div>
<svg class="a" style="left:-5px;top:416px" width="17" height="15" viewBox="0 0 17 15"><path d="M0 4 L11 2 L16 4 L16 8 L9 12 L0 10 Z" fill="#4c4c4c"/><path d="M0 4 L11 2 L16 4 L9 7 L0 6 Z" fill="#ececec" stroke="#bdbdbd" stroke-width=".6"/><path d="M9 7 L16 4 V5.500 L9 8.500Z" fill="#9a9a9a"/></svg>
<div class="t" style="left:16px;top:417px;letter-spacing:-0.16px">Disque amovible (K:)</div>
<svg class="a" style="left:-5px;top:433px" width="17" height="15" viewBox="0 0 17 15"><path d="M0 4 L11 2 L16 4 L16 8 L9 12 L0 10 Z" fill="#4c4c4c"/><path d="M0 4 L11 2 L16 4 L9 7 L0 6 Z" fill="#ececec" stroke="#bdbdbd" stroke-width=".6"/><path d="M9 7 L16 4 V5.500 L9 8.500Z" fill="#9a9a9a"/></svg>
<div class="t" style="left:16px;top:434px;letter-spacing:-0.16px">Disque amovible (L:)</div>
<svg class="a" style="left:-5px;top:450px" width="17" height="15" viewBox="0 0 17 15"><rect x="0" y="2" width="14" height="12" rx="1.500" fill="#ddd"/><rect x="0" y="1" width="13" height="12" rx="1" fill="#c41e2c"/><path d="M3 12 L10.500 4.500" stroke="#fff" stroke-width="2.400"/><path d="M5.500 3.500 H11.500 V9.500 Z" fill="#fff"/></svg>
<div class="t" style="left:16px;top:451px;letter-spacing:-0.16px">DIRT (M:)</div>
<svg class="a" style="left:-5px;top:467px" width="17" height="15" viewBox="0 0 17 15"><path d="M0 6 L9 3 Q16 4 16 7 L16 9 L8 12 L0 10 Z" fill="#505050"/><path d="M0 6 L9 3 Q16 4 16 6.500 L8 9 L0 8 Z" fill="#e4e4e4" stroke="#b8b8b8" stroke-width=".6"/><circle cx="13.500" cy="9" r=".8" fill="#5d5"/></svg>
<div class="t" style="left:16px;top:468px;letter-spacing:-0.31px">SWAP (N:)</div>
<svg class="a" style="left:-5px;top:484px" width="17" height="15" viewBox="0 0 17 15"><path d="M0 6 L9 3 Q16 4 16 7 L16 9 L8 12 L0 10 Z" fill="#505050"/><path d="M0 6 L9 3 Q16 4 16 6.500 L8 9 L0 8 Z" fill="#e4e4e4" stroke="#b8b8b8" stroke-width=".6"/><circle cx="13.500" cy="9" r=".8" fill="#5d5"/></svg>
<div class="t" style="left:16px;top:485px;letter-spacing:-0.11px">Video (O:)</div>
<svg class="a" style="left:-5px;top:501px" width="17" height="15" viewBox="0 0 17 15"><ellipse cx="7" cy="7.500" rx="9" ry="7" fill="#f4f4f4" stroke="#bbb"/><text x="-1" y="10" font-size="7" font-weight="bold" font-family="Liberation Sans, sans-serif" fill="#111">dobe</text></svg>
<div class="t" style="left:16px;top:502px;letter-spacing:-0.64px">LRMCFRE_EN_DVD (P:)</div>
<svg class="a" style="left:-5px;top:518px" width="17" height="15" viewBox="0 0 17 15"><path d="M2 3 L11 1 L16 3 L16 6 L8 8 L2 6 Z" fill="#505050"/><path d="M2 3 L11 1 L16 3 L8 5 Z" fill="#dcdcdc"/><path d="M8 8 v3" stroke="#333" stroke-width="2"/><path d="M1 12.500 h15" stroke="#222" stroke-width="2"/><rect x="4" y="10" width="5" height="4.500" fill="#f0dc50" stroke="#6a5a10" stroke-width=".7"/></svg>
<div class="t" style="left:16px;top:519px;letter-spacing:-0.19px">F sur 'Salon' (Y:)</div>
<svg class="a" style="left:-5px;top:535px" width="17" height="15" viewBox="0 0 17 15"><path d="M2 3 L11 1 L16 3 L16 6 L8 8 L2 6 Z" fill="#505050"/><path d="M2 3 L11 1 L16 3 L8 5 Z" fill="#dcdcdc"/><path d="M8 8 v3" stroke="#333" stroke-width="2"/><path d="M1 12.500 h15" stroke="#222" stroke-width="2"/><rect x="4" y="10" width="5" height="4.500" fill="#f0dc50" stroke="#6a5a10" stroke-width=".7"/></svg>
<div class="t" style="left:16px;top:536px;letter-spacing:-0.25px">E sur 'Salon' (Z:)</div>
<svg class="a" style="left:-5px;top:553px" width="16" height="13" viewBox="0 0 16 13"><path d="M.5 11 V2 q0-1.500 1.500-1.500 h3 q1 0 1.500 1 l.5 1 h6.500 q1.500 0 1.500 1.500 v7 q0 1.500-1.500 1.500 h-11.500 q-1.500 0-1.500-1.500z" fill="url(#fg)" stroke="#c59a35"/><path d="M1.500 5.500 h13" stroke="#fff8d0" opacity=".8"/><path d="M1.500 12.500 h13" stroke="#a67a1e"/></svg>
<div class="t" style="left:16px;top:553px;letter-spacing:-0.14px">Documents partagés</div>
<svg class="a" style="left:-5px;top:570px" width="16" height="13" viewBox="0 0 16 13"><path d="M.5 11 V2 q0-1.500 1.500-1.500 h3 q1 0 1.500 1 l.5 1 h6.500 q1.500 0 1.500 1.500 v7 q0 1.500-1.500 1.500 h-11.500 q-1.500 0-1.500-1.500z" fill="url(#fg)" stroke="#c59a35"/><path d="M1.500 5.500 h13" stroke="#fff8d0" opacity=".8"/><path d="M1.500 12.500 h13" stroke="#a67a1e"/></svg>
<div class="t" style="left:16px;top:570px;letter-spacing:-0.21px">Documents de Yannoux</div>
<svg class="a" style="left:-5px;top:587px" width="16" height="13" viewBox="0 0 16 13"><path d="M.5 11 V2 q0-1.500 1.500-1.500 h3 q1 0 1.500 1 l.5 1 h6.500 q1.500 0 1.500 1.500 v7 q0 1.500-1.500 1.500 h-11.500 q-1.500 0-1.500-1.500z" fill="url(#fg)" stroke="#c59a35"/><path d="M1.500 5.500 h13" stroke="#fff8d0" opacity=".8"/><path d="M1.500 12.500 h13" stroke="#a67a1e"/></svg>
<svg class="a" style="left:-5px;top:594px" width="14" height="8" viewBox="0 0 14 8"><circle cx="4" cy="4" r="3" fill="#3aa0e0" stroke="#246"/><circle cx="10" cy="4" r="3" fill="#50c050" stroke="#264"/></svg>
<div class="t" style="left:16px;top:587px;letter-spacing:-0.15px">Mes dossiers de partage</div>
<div class="a" style="left:280px;top:0;width:17px;height:597px;background:linear-gradient(90deg,#f3f1ec,#fdfdfb)"></div>
<div class="sbtn" style="left:280px;top:1px;width:17px;height:17px"><svg style="left:3px;top:5px" width="9" height="6" viewBox="0 0 9 6"><path d="M1 5 L4.500 1.500 L8 5" fill="none" stroke="#4d6185" stroke-width="2"/></svg></div>
<div class="sbtn" style="left:280px;top:580px;width:17px;height:17px"><svg style="left:3px;top:5px" width="9" height="6" viewBox="0 0 9 6"><path d="M1 1 L4.500 4.500 L8 1" fill="none" stroke="#4d6185" stroke-width="2"/></svg></div>
<div class="thumb" style="left:280px;top:247px;width:17px;height:313px;background:linear-gradient(90deg,#c9d8fc 0%,#c2d3fc 50%,#b9ccf8 100%)"><div class="a" style="left:5px;top:150px;width:6px;height:7px;background:repeating-linear-gradient(180deg,#eef4fe 0 1px,#8ca6dc 1px 2px)"></div></div>
<div class="a" style="left:0;top:597px;width:297px;height:17px;background:linear-gradient(180deg,#f3f1ec,#fdfdfb)"></div>
<div class="sbtn" style="left:0px;top:597px;width:15px;height:17px"><svg style="left:4px;top:3px" width="6" height="9" viewBox="0 0 6 9"><path d="M5 1 L1.500 4.500 L5 8" fill="none" stroke="#4d6185" stroke-width="2"/></svg></div>
<div class="sbtn" style="left:263px;top:597px;width:17px;height:17px"><svg style="left:5px;top:3px" width="6" height="9" viewBox="0 0 6 9"><path d="M1 1 L4.500 4.500 L1 8" fill="none" stroke="#4d6185" stroke-width="2"/></svg></div>
<div class="thumb" style="left:50px;top:597px;width:211px;height:17px;background:linear-gradient(180deg,#c9d8fc 0%,#c2d3fc 50%,#b9ccf8 100%)"><div class="a" style="left:101px;top:4px;width:7px;height:6px;background:repeating-linear-gradient(90deg,#eef4fe 0 1px,#8ca6dc 1px 2px)"></div></div>
<div class="a" style="left:280px;top:597px;width:17px;height:18px;background:#ece9d8"></div>
</div>
<div class="a" style="left:2px;top:335px;width:297px;height:26px;background:linear-gradient(180deg,#f7f6f0 0%,#f1efe6 50%,#e8e5d6 100%)"></div>
<div class="a" style="left:2px;top:360px;width:297px;height:1px;background:#c2bfb0"></div>
<div class="t" style="left:3px;top:341px;letter-spacing:-0.24px">Folders</div>
<div class="t" style="left:123px;top:341px;letter-spacing:-0.12px">New folder</div>
<div class="t" style="left:185px;top:341px;letter-spacing:-0.19px">Refresh Folders</div>
<svg class="a" style="left:279px;top:342px" width="9" height="9" viewBox="0 0 9 9"><path d="M1 1 L8 8 M8 1 L1 8" stroke="#222" stroke-width="1.300"/></svg>
<div class="a" style="left:299px;top:335px;width:6px;height:640px;background:#ece9d8"></div>
<!-- file list -->
<div class="a" style="left:304px;top:334px;width:1px;height:641px;background:#b5b2a3"></div>
<div class="a" style="left:305px;top:334px;width:974px;height:641px;background:#fff;overflow:hidden" id="flist">
<div class="a" style="left:0;top:0;width:974px;height:18px;background:linear-gradient(180deg,#f0eee2 0%,#ebe8d8 70%,#ddd9c8 85%,#cbc7b8 100%)"></div>
<div class="a" style="left:0;top:0;width:974px;height:1px;background:#aca899"></div>
<div class="t" style="left:4px;top:4px;letter-spacing:-0.47px">File Name</div>
<div class="t" style="left:655px;top:4px;letter-spacing:-0.08px">Title</div>
<div class="t" style="left:814px;top:4px;letter-spacing:-0.21px">Year</div>
<div class="t" style="left:844px;top:4px;letter-spacing:-0.29px">Genre</div>
<div class="t" style="left:906px;top:4px;letter-spacing:-0.15px">Trac...</div>
<div class="a" style="left:649px;top:3px;width:1px;height:13px;background:#c5c2b2"></div><div class="a" style="left:650px;top:3px;width:1px;height:13px;background:#fff"></div>
<div class="a" style="left:799px;top:3px;width:1px;height:13px;background:#c5c2b2"></div><div class="a" style="left:800px;top:3px;width:1px;height:13px;background:#fff"></div>
<div class="a" style="left:839px;top:3px;width:1px;height:13px;background:#c5c2b2"></div><div class="a" style="left:840px;top:3px;width:1px;height:13px;background:#fff"></div>
<div class="a" style="left:899px;top:3px;width:1px;height:13px;background:#c5c2b2"></div><div class="a" style="left:900px;top:3px;width:1px;height:13px;background:#fff"></div>
<div class="a" style="left:953px;top:3px;width:1px;height:13px;background:#c5c2b2"></div><div class="a" style="left:954px;top:3px;width:1px;height:13px;background:#fff"></div>
<svg class="a" style="left:941px;top:6px" width="9" height="6" viewBox="0 0 9 6"><path d="M0.500 0.500 h8 l-4 4.500 z" fill="#ece9d8" stroke="#aca899"/></svg>
<div class="a" style="left:0;top:18px;width:974px;height:17px;background:#c6fdd9"></div>
<div class="a" style="left:3px;top:21px;width:13px;height:13px;border:1px solid #1f4f66;background:#fff"><svg class="a" style="left:1px;top:1px" width="9" height="9" viewBox="0 0 9 9"><path d="M1 3.500 L3.500 6.500 L8 1.500" fill="none" stroke="#229a22" stroke-width="2"/></svg></div>
<svg class="a" style="left:23px;top:19px" width="12" height="15" viewBox="0 0 13 16"><path d="M1 .5 h7.500 l3.500 3.500 v11 h-11z" fill="#dcebfb" stroke="#8aaad4"/><path d="M1.500 12 h10 v3 h-10z" fill="#b9d3f3"/><path d="M3 8.500 h2.500 v-3.500 h2.500 v3.500 h2" fill="none" stroke="#222" stroke-width="1.200"/></svg>
<div class="t" style="left:41px;top:20px;letter-spacing:0.08px">01-th</div>
<div class="t" style="left:652px;top:20px;letter-spacing:-0.05px">Retrospect</div>
<div class="t" style="left:808px;top:20px;letter-spacing:-0.03px">2006</div>
<div class="t" style="left:842px;top:20px;letter-spacing:-0.26px">Hardcore</div>
<div class="t" style="left:907px;top:20px;width:41px;text-align:right;letter-spacing:0.10px">1/13</div>
<div class="t" style="left:966px;top:20px;letter-spacing:-0.85px">VBR</div>
<div class="a" style="left:3px;top:38px;width:13px;height:13px;border:1px solid #1f4f66;background:#fff"><svg class="a" style="left:1px;top:1px" width="9" height="9" viewBox="0 0 9 9"><path d="M1 3.500 L3.500 6.500 L8 1.500" fill="none" stroke="#229a22" stroke-width="2"/></svg></div>
<svg class="a" style="left:23px;top:36px" width="12" height="15" viewBox="0 0 13 16"><path d="M1 .5 h7.500 l3.500 3.500 v11 h-11z" fill="#dcebfb" stroke="#8aaad4"/><path d="M1.500 12 h10 v3 h-10z" fill="#b9d3f3"/><path d="M3 8.500 h2.500 v-3.500 h2.500 v3.500 h2" fill="none" stroke="#222" stroke-width="1.200"/></svg>
<div class="t" style="left:41px;top:37px;letter-spacing:0.08px">02-th</div>
<div class="t" style="left:652px;top:37px;letter-spacing:-0.19px">Prelude (Again)</div>
<div class="t" style="left:808px;top:37px;letter-spacing:-0.03px">2006</div>
<div class="t" style="left:842px;top:37px;letter-spacing:-0.26px">Hardcore</div>
<div class="t" style="left:907px;top:37px;width:41px;text-align:right;letter-spacing:0.10px">2/13</div>
<div class="t" style="left:966px;top:37px;letter-spacing:-0.85px">VBR</div>
<div class="a" style="left:0;top:52px;width:974px;height:17px;background:#c6fdd9"></div>
<div class="a" style="left:3px;top:55px;width:13px;height:13px;border:1px solid #1f4f66;background:#fff"><svg class="a" style="left:1px;top:1px" width="9" height="9" viewBox="0 0 9 9"><path d="M1 3.500 L3.500 6.500 L8 1.500" fill="none" stroke="#229a22" stroke-width="2"/></svg></div>
<svg class="a" style="left:23px;top:53px" width="12" height="15" viewBox="0 0 13 16"><path d="M1 .5 h7.500 l3.500 3.500 v11 h-11z" fill="#dcebfb" stroke="#8aaad4"/><path d="M1.500 12 h10 v3 h-10z" fill="#b9d3f3"/><path d="M3 8.500 h2.500 v-3.500 h2.500 v3.500 h2" fill="none" stroke="#222" stroke-width="1.200"/></svg>
<div class="t" style="left:41px;top:54px;letter-spacing:0.11px">03-th</div>
<div class="t" style="left:652px;top:54px;letter-spacing:-0.34px">Here Comes The Rains</div>
<div class="t" style="left:808px;top:54px;letter-spacing:-0.03px">2006</div>
<div class="t" style="left:842px;top:54px;letter-spacing:-0.26px">Hardcore</div>
<div class="t" style="left:907px;top:54px;width:41px;text-align:right;letter-spacing:0.14px">3/13</div>
<div class="t" style="left:966px;top:54px;letter-spacing:-0.85px">VBR</div>
<div class="a" style="left:3px;top:72px;width:13px;height:13px;border:1px solid #1f4f66;background:#fff"><svg class="a" style="left:1px;top:1px" width="9" height="9" viewBox="0 0 9 9"><path d="M1 3.500 L3.500 6.500 L8 1.500" fill="none" stroke="#229a22" stroke-width="2"/></svg></div>
<svg class="a" style="left:23px;top:70px" width="12" height="15" viewBox="0 0 13 16"><path d="M1 .5 h7.500 l3.500 3.500 v11 h-11z" fill="#dcebfb" stroke="#8aaad4"/><path d="M1.500 12 h10 v3 h-10z" fill="#b9d3f3"/><path d="M3 8.500 h2.500 v-3.500 h2.500 v3.500 h2" fill="none" stroke="#222" stroke-width="1.200"/></svg>
<div class="t" style="left:41px;top:71px;letter-spacing:0.06px">04-th</div>
<div class="t" style="left:652px;top:71px;letter-spacing:-0.44px">Permanence</div>
<div class="t" style="left:808px;top:71px;letter-spacing:-0.03px">2006</div>
<div class="t" style="left:842px;top:71px;letter-spacing:-0.26px">Hardcore</div>
<div class="t" style="left:907px;top:71px;width:41px;text-align:right;letter-spacing:0.08px">4/13</div>
<div class="t" style="left:966px;top:71px;letter-spacing:-0.85px">VBR</div>
<div class="a" style="left:0;top:86px;width:974px;height:17px;background:#c6fdd9"></div>
<div class="a" style="left:3px;top:89px;width:13px;height:13px;border:1px solid #1f4f66;background:#fff"><svg class="a" style="left:1px;top:1px" width="9" height="9" viewBox="0 0 9 9"><path d="M1 3.500 L3.500 6.500 L8 1.500" fill="none" stroke="#229a22" stroke-width="2"/></svg></div>
<svg class="a" style="left:23px;top:87px" width="12" height="15" viewBox="0 0 13 16"><path d="M1 .5 h7.500 l3.500 3.500 v11 h-11z" fill="#dcebfb" stroke="#8aaad4"/><path d="M1.500 12 h10 v3 h-10z" fill="#b9d3f3"/><path d="M3 8.500 h2.500 v-3.500 h2.500 v3.500 h2" fill="none" stroke="#222" stroke-width="1.200"/></svg>
<div class="t" style="left:41px;top:88px;letter-spacing:0.00px">05-th</div>
<div class="t" style="left:652px;top:88px;letter-spacing:-0.13px">4/8/05</div>
<div class="t" style="left:808px;top:88px;letter-spacing:-0.03px">2006</div>
<div class="t" style="left:842px;top:88px;letter-spacing:-0.26px">Hardcore</div>
<div class="t" style="left:907px;top:88px;width:41px;text-align:right;letter-spacing:0.00px">5/13</div>
<div class="t" style="left:966px;top:88px;letter-spacing:-0.85px">VBR</div>
<div class="a" style="left:3px;top:106px;width:13px;height:13px;border:1px solid #1f4f66;background:#fff"><svg class="a" style="left:1px;top:1px" width="9" height="9" viewBox="0 0 9 9"><path d="M1 3.500 L3.500 6.500 L8 1.500" fill="none" stroke="#229a22" stroke-width="2"/></svg></div>
<svg class="a" style="left:23px;top:104px" width="12" height="15" viewBox="0 0 13 16"><path d="M1 .5 h7.500 l3.500 3.500 v11 h-11z" fill="#dcebfb" stroke="#8aaad4"/><path d="M1.500 12 h10 v3 h-10z" fill="#b9d3f3"/><path d="M3 8.500 h2.500 v-3.500 h2.500 v3.500 h2" fill="none" stroke="#222" stroke-width="1.200"/></svg>
<div class="t" style="left:41px;top:105px;letter-spacing:0.08px">06-th</div>
<div class="t" style="left:652px;top:105px;letter-spacing:-0.15px">The Polygraph Cheaters</div>
<div class="t" style="left:808px;top:105px;letter-spacing:-0.03px">2006</div>
<div class="t" style="left:842px;top:105px;letter-spacing:-0.26px">Hardcore</div>
<div class="t" style="left:907px;top:105px;width:41px;text-align:right;letter-spacing:0.10px">6/13</div>
<div class="t" style="left:966px;top:105px;letter-spacing:-0.85px">VBR</div>
<div class="a" style="left:0;top:120px;width:974px;height:17px;background:#c6fdd9"></div>
<div class="a" style="left:3px;top:123px;width:13px;height:13px;border:1px solid #1f4f66;background:#fff"><svg class="a" style="left:1px;top:1px" width="9" height="9" viewBox="0 0 9 9"><path d="M1 3.500 L3.500 6.500 L8 1.500" fill="none" stroke="#229a22" stroke-width="2"/></svg></div>
<svg class="a" style="left:23px;top:121px" width="12" height="15" viewBox="0 0 13 16"><path d="M1 .5 h7.500 l3.500 3.500 v11 h-11z" fill="#dcebfb" stroke="#8aaad4"/><path d="M1.500 12 h10 v3 h-10z" fill="#b9d3f3"/><path d="M3 8.500 h2.500 v-3.500 h2.500 v3.500 h2" fill="none" stroke="#222" stroke-width="1.200"/></svg>
<div class="t" style="left:41px;top:122px;letter-spacing:0.00px">07-th</div>
<div class="t" style="left:652px;top:122px;letter-spacing:-0.23px">Deliver Me</div>
<div class="t" style="left:808px;top:122px;letter-spacing:-0.03px">2006</div>
<div class="t" style="left:842px;top:122px;letter-spacing:-0.26px">Hardcore</div>
<div class="t" style="left:907px;top:122px;width:41px;text-align:right;letter-spacing:0.00px">7/13</div>
<div class="t" style="left:966px;top:122px;letter-spacing:-0.85px">VBR</div>
<div class="a" style="left:3px;top:140px;width:13px;height:13px;border:1px solid #1f4f66;background:#fff"><svg class="a" style="left:1px;top:1px" width="9" height="9" viewBox="0 0 9 9"><path d="M1 3.500 L3.500 6.500 L8 1.500" fill="none" stroke="#229a22" stroke-width="2"/></svg></div>
<svg class="a" style="left:23px;top:138px" width="12" height="15" viewBox="0 0 13 16"><path d="M1 .5 h7.500 l3.500 3.500 v11 h-11z" fill="#dcebfb" stroke="#8aaad4"/><path d="M1.500 12 h10 v3 h-10z" fill="#b9d3f3"/><path d="M3 8.500 h2.500 v-3.500 h2.500 v3.500 h2" fill="none" stroke="#222" stroke-width="1.200"/></svg>
<div class="t" style="left:41px;top:139px;letter-spacing:0.05px">08-th</div>
<div class="t" style="left:652px;top:139px;letter-spacing:-0.12px">The Absentee Ballot</div>
<div class="t" style="left:808px;top:139px;letter-spacing:-0.03px">2006</div>
<div class="t" style="left:842px;top:139px;letter-spacing:-0.26px">Hardcore</div>
<div class="t" style="left:907px;top:139px;width:41px;text-align:right;letter-spacing:0.06px">8/13</div>
<div class="t" style="left:966px;top:139px;letter-spacing:-0.85px">VBR</div>
<div class="a" style="left:0;top:154px;width:974px;height:17px;background:#c6fdd9"></div>
<div class="a" style="left:3px;top:157px;width:13px;height:13px;border:1px solid #1f4f66;background:#fff"><svg class="a" style="left:1px;top:1px" width="9" height="9" viewBox="0 0 9 9"><path d="M1 3.500 L3.500 6.500 L8 1.500" fill="none" stroke="#229a22" stroke-width="2"/></svg></div>
<svg class="a" style="left:23px;top:155px" width="12" height="15" viewBox="0 0 13 16"><path d="M1 .5 h7.500 l3.500 3.500 v11 h-11z" fill="#dcebfb" stroke="#8aaad4"/><path d="M1.500 12 h10 v3 h-10z" fill="#b9d3f3"/><path d="M3 8.500 h2.500 v-3.500 h2.500 v3.500 h2" fill="none" stroke="#222" stroke-width="1.200"/></svg>
<div class="t" style="left:41px;top:156px;letter-spacing:0.12px">09-th</div>
<div class="t" style="left:652px;top:156px;letter-spacing:-0.18px">Broken Teeth</div>
<div class="t" style="left:808px;top:156px;letter-spacing:-0.03px">2006</div>
<div class="t" style="left:842px;top:156px;letter-spacing:-0.26px">Hardcore</div>
<div class="t" style="left:907px;top:156px;width:41px;text-align:right;letter-spacing:0.14px">9/13</div>
<div class="t" style="left:966px;top:156px;letter-spacing:-0.85px">VBR</div>
<div class="a" style="left:3px;top:174px;width:13px;height:13px;border:1px solid #1f4f66;background:#fff"><svg class="a" style="left:1px;top:1px" width="9" height="9" viewBox="0 0 9 9"><path d="M1 3.500 L3.500 6.500 L8 1.500" fill="none" stroke="#229a22" stroke-width="2"/></svg></div>
<svg class="a" style="left:23px;top:172px" width="12" height="15" viewBox="0 0 13 16"><path d="M1 .5 h7.500 l3.500 3.500 v11 h-11z" fill="#dcebfb" stroke="#8aaad4"/><path d="M1.500 12 h10 v3 h-10z" fill="#b9d3f3"/><path d="M3 8.500 h2.500 v-3.500 h2.500 v3.500 h2" fill="none" stroke="#222" stroke-width="1.200"/></svg>
<div class="t" style="left:41px;top:173px;letter-spacing:0.08px">10-th</div>
<div class="t" style="left:652px;top:173px;letter-spacing:-0.12px">8/27/05</div>
<div class="t" style="left:808px;top:173px;letter-spacing:-0.03px">2006</div>
<div class="t" style="left:842px;top:173px;letter-spacing:-0.26px">Hardcore</div>
<div class="t" style="left:907px;top:173px;width:41px;text-align:right;letter-spacing:0.04px">10/13</div>
<div class="t" style="left:966px;top:173px;letter-spacing:-0.85px">VBR</div>
<div class="a" style="left:0;top:188px;width:974px;height:17px;background:#c6fdd9"></div>
<div class="a" style="left:3px;top:191px;width:13px;height:13px;border:1px solid #1f4f66;background:#fff"><svg class="a" style="left:1px;top:1px" width="9" height="9" viewBox="0 0 9 9"><path d="M1 3.500 L3.500 6.500 L8 1.500" fill="none" stroke="#229a22" stroke-width="2"/></svg></div>
<svg class="a" style="left:23px;top:189px" width="12" height="15" viewBox="0 0 13 16"><path d="M1 .5 h7.500 l3.500 3.500 v11 h-11z" fill="#dcebfb" stroke="#8aaad4"/><path d="M1.500 12 h10 v3 h-10z" fill="#b9d3f3"/><path d="M3 8.500 h2.500 v-3.500 h2.500 v3.500 h2" fill="none" stroke="#222" stroke-width="1.200"/></svg>
<div class="t" style="left:41px;top:190px;letter-spacing:0.16px">11-th</div>
<div class="t" style="left:652px;top:190px;letter-spacing:-0.41px">Procession Commence</div>
<div class="t" style="left:808px;top:190px;letter-spacing:-0.03px">2006</div>
<div class="t" style="left:842px;top:190px;letter-spacing:-0.26px">Hardcore</div>
<div class="t" style="left:907px;top:190px;width:41px;text-align:right;letter-spacing:0.12px">11/13</div>
<div class="t" style="left:966px;top:190px;letter-spacing:-0.85px">VBR</div>
<div class="a" style="left:3px;top:208px;width:13px;height:13px;border:1px solid #1f4f66;background:#fff"><svg class="a" style="left:1px;top:1px" width="9" height="9" viewBox="0 0 9 9"><path d="M1 3.500 L3.500 6.500 L8 1.500" fill="none" stroke="#229a22" stroke-width="2"/></svg></div>
<svg class="a" style="left:23px;top:206px" width="12" height="15" viewBox="0 0 13 16"><path d="M1 .5 h7.500 l3.500 3.500 v11 h-11z" fill="#dcebfb" stroke="#8aaad4"/><path d="M1.500 12 h10 v3 h-10z" fill="#b9d3f3"/><path d="M3 8.500 h2.500 v-3.500 h2.500 v3.500 h2" fill="none" stroke="#222" stroke-width="1.200"/></svg>
<div class="t" style="left:41px;top:207px;letter-spacing:0.16px">12-th</div>
<div class="t" style="left:652px;top:207px;letter-spacing:-0.07px">Nobody Leaves Without Sin...</div>
<div class="t" style="left:808px;top:207px;letter-spacing:-0.03px">2006</div>
<div class="t" style="left:842px;top:207px;letter-spacing:-0.26px">Hardcore</div>
<div class="t" style="left:907px;top:207px;width:41px;text-align:right;letter-spacing:0.12px">12/13</div>
<div class="t" style="left:966px;top:207px;letter-spacing:-0.85px">VBR</div>
<div class="a" style="left:0;top:222px;width:974px;height:17px;background:#c6fdd9"></div>
<div class="a" style="left:3px;top:225px;width:13px;height:13px;border:1px solid #1f4f66;background:#fff"><svg class="a" style="left:1px;top:1px" width="9" height="9" viewBox="0 0 9 9"><path d="M1 3.500 L3.500 6.500 L8 1.500" fill="none" stroke="#229a22" stroke-width="2"/></svg></div>
<svg class="a" style="left:23px;top:223px" width="12" height="15" viewBox="0 0 13 16"><path d="M1 .5 h7.500 l3.500 3.500 v11 h-11z" fill="#dcebfb" stroke="#8aaad4"/><path d="M1.500 12 h10 v3 h-10z" fill="#b9d3f3"/><path d="M3 8.500 h2.500 v-3.500 h2.500 v3.500 h2" fill="none" stroke="#222" stroke-width="1.200"/></svg>
<div class="t" style="left:41px;top:224px;letter-spacing:0.19px">13-th</div>
<div class="t" style="left:652px;top:224px;letter-spacing:-0.41px">Epilogue</div>
<div class="t" style="left:808px;top:224px;letter-spacing:-0.03px">2006</div>
<div class="t" style="left:842px;top:224px;letter-spacing:-0.26px">Hardcore</div>
<div class="t" style="left:907px;top:224px;width:41px;text-align:right;letter-spacing:0.14px">13/13</div>
<div class="t" style="left:966px;top:224px;letter-spacing:-0.85px">VBR</div>
<div class="a" style="left:0;top:623px;width:974px;height:18px;background:linear-gradient(180deg,#f3f1ec,#fdfdfb)"></div>
<div class="sbtn" style="left:0px;top:623px;width:17px;height:17px"><svg style="left:4px;top:3px" width="6" height="9" viewBox="0 0 6 9"><path d="M5 1 L1.500 4.500 L5 8" fill="none" stroke="#4d6185" stroke-width="2"/></svg></div>
<div class="sbtn" style="left:957px;top:623px;width:17px;height:17px"><svg style="left:4px;top:3px" width="6" height="9" viewBox="0 0 6 9"><path d="M1 1 L4.500 4.500 L1 8" fill="none" stroke="#4d6185" stroke-width="2"/></svg></div>
<div class="thumb" style="left:17px;top:623px;width:836px;height:17px;background:linear-gradient(180deg,#c9d8fc 0%,#c2d3fc 50%,#b9ccf8 100%)"><div class="a" style="left:414px;top:4px;width:7px;height:6px;background:repeating-linear-gradient(90deg,#eef4fe 0 1px,#8ca6dc 1px 2px)"></div></div>
</div>
<!-- status bar -->
<div class="a" style="left:2px;top:975px;width:1277px;height:18px;background:#ece9d8"></div>
<div class="a" style="left:2px;top:975px;width:1277px;height:1px;background:#c5c2b2"></div>
<div class="a" style="left:2px;top:976px;width:1277px;height:1px;background:#f6f5ee"></div>
<div class="a" style="left:108px;top:978px;width:1px;height:15px;background:#c5c2b2"></div><div class="a" style="left:109px;top:978px;width:1px;height:15px;background:#fff"></div>
<div class="a" style="left:233px;top:978px;width:1px;height:15px;background:#c5c2b2"></div><div class="a" style="left:234px;top:978px;width:1px;height:15px;background:#fff"></div>
<div class="a" style="left:360px;top:978px;width:1px;height:15px;background:#c5c2b2"></div><div class="a" style="left:361px;top:978px;width:1px;height:15px;background:#fff"></div>
<div class="a" style="left:506px;top:978px;width:1px;height:15px;background:#c5c2b2"></div><div class="a" style="left:507px;top:978px;width:1px;height:15px;background:#fff"></div>
<div class="a" style="left:1137px;top:978px;width:1px;height:15px;background:#c5c2b2"></div><div class="a" style="left:1138px;top:978px;width:1px;height:15px;background:#fff"></div>
<div class="a" style="left:1237px;top:978px;width:1px;height:15px;background:#c5c2b2"></div><div class="a" style="left:1238px;top:978px;width:1px;height:15px;background:#fff"></div>
<div class="t" style="left:2px;top:980px;letter-spacing:0.00px">Total files: 13</div>
<div class="t" style="left:113px;top:980px;letter-spacing:-0.06px">Selected files: 13</div>
<div class="t" style="left:238px;top:980px;letter-spacing:0.05px">Total time: 28:26</div>
<div class="t" style="left:365px;top:980px;letter-spacing:0.00px">Selected time: 28:26</div>
<div class="t" style="left:1142px;top:980px;letter-spacing:-0.03px">47,0 Mo</div>
<div class="a" style="left:1248px;top:978px;width:15px;height:15px;border-radius:50%;background:radial-gradient(circle at 35% 30%,#8cf08c 0%,#2cc42c 45%,#129012 100%)"></div>
<!-- dialog -->
<div class="a" style="left:370px;top:272px;width:540px;height:479px;border-radius:8px 8px 0 0;background:#0831d9;overflow:hidden">
<div class="a" style="left:0;top:0;width:540px;height:30px;background:linear-gradient(180deg,#0a53d8 0%,#2f8fff 5%,#2a88fc 8%,#0a6af0 14%,#0058e6 26%,#0058e6 45%,#0466fa 65%,#0468fc 88%,#0050e0 95%,#0038b8 100%)"></div>
<div class="a" style="left:0;top:30px;width:4px;height:449px;background:linear-gradient(90deg,#0019cf 0 1px,#0a44ea 1px 2px,#1a5cf8 2px 3px,#0a3ce0 3px 4px)"></div><div class="a" style="left:536px;top:30px;width:4px;height:449px;background:linear-gradient(270deg,#0019cf 0 1px,#0a34dc 1px 2px,#0f4cf0 2px 3px,#0a3ce0 3px 4px)"></div><div class="a" style="left:0;top:475px;width:540px;height:4px;background:linear-gradient(0deg,#00138c 0 1px,#0024c0 1px 2px,#0030d4 2px 3px,#0a3ce0 3px 4px)"></div>
<svg class="a" style="left:6px;top:7px" width="18" height="17" viewBox="0 0 18 17">
<rect x="1.700" y="2.700" width="12" height="12" fill="#cfe0fa" stroke="#0c0c34" stroke-width="1.400"/>
<path d="M7.700 1.400 L15 8.700 L7.700 16 L0.400 8.700 Z" fill="#fdfdfb" stroke="#111" stroke-width="1.100" stroke-dasharray="1.200 .8"/>
<path d="M5.500 7.500 L9.500 10" stroke="#e4da4c" stroke-width="2.400"/>
<circle cx="6.800" cy="9.600" r="1.200" fill="#111"/>
<path d="M8.800 7.200 L12.800 3.200" stroke="#2626b8" stroke-width="2.400"/>
<circle cx="14.200" cy="2.300" r="1.900" fill="#b82444"/><circle cx="13.600" cy="2" r=".6" fill="#f4c0c8"/>
</svg>
<div class="t" style="left:26px;top:9px;font:bold 14px/17px 'Liberation Sans',sans-serif;height:17px;color:#fff;letter-spacing:0;text-shadow:1px 1px 0 #0a1883;transform-origin:0 0;transform:scaleX(.885)">Get Album Songs</div>
<div class="a" style="left:467px;top:6px;width:21px;height:21px;border:1px solid #7398ee;border-radius:3px;background:linear-gradient(135deg,#4a78ec 0%,#2454d8 40%,#1c4ad0 100%)"><div class="a" style="left:4px;top:12px;width:6px;height:3px;background:#8fb0f4"></div></div>
<div class="a" style="left:490px;top:6px;width:21px;height:21px;border:1px solid #fff;border-radius:3px;background:linear-gradient(135deg,#6f9cf8 0%,#3c6ee8 35%,#2450d0 100%)"><div class="a" style="left:3px;top:3px;width:12px;height:12px;border:1px solid #fff;border-top-width:3px"></div></div>
<div class="a" style="left:513px;top:6px;width:21px;height:21px;border:1px solid #fff;border-radius:3px;background:linear-gradient(135deg,#eaa08a 0%,#e0603a 35%,#c83c18 100%)"><svg class="a" style="left:3px;top:3px" width="13" height="13" viewBox="0 0 13 13"><path d="M1.500 1.500 L11.500 11.500 M11.500 1.500 L1.500 11.500" stroke="#fff" stroke-width="2.300"/></svg></div>
<div class="a" style="left:4px;top:30px;width:532px;height:445px;background:#ece9d8"></div>
<div class="gb" style="left:6px;top:36px;width:529px;height:74px"></div>
<div class="a" style="left:12px;top:30px;width:207px;height:13px;background:#ece9d8"></div>
<div class="t blue" style="left:15px;top:31px;letter-spacing:-0.23px">Click on album name and press "Get Titles"</div>
<div class="inp" style="left:7px;top:46px;width:526px;height:62px"></div>
<div class="a" style="left:9px;top:48px;width:522px;height:13px;background:#316ac5"></div>
<div class="t" style="left:11px;top:49px;color:#fff;letter-spacing:-0.26px">classical a506b00d This is Hell / Sundowning</div>
<div class="gb" style="left:6px;top:120px;width:529px;height:130px"></div>
<div class="a" style="left:9px;top:114px;width:60px;height:13px;background:#ece9d8"></div>
<div class="t blue" style="left:11px;top:115px;letter-spacing:-0.04px">Songs titles</div>
<div class="inp" style="left:7px;top:130px;width:526px;height:119px"></div>
<div class="a" style="left:9px;top:132px;width:505px;height:13px;background:#316ac5"></div>
<div class="t" style="left:11px;top:133px;color:#fff;letter-spacing:-0.05px">Retrospect</div>
<div class="t" style="left:11px;top:146px;letter-spacing:-0.19px">Prelude (Again)</div>
<div class="t" style="left:11px;top:159px;letter-spacing:-0.24px">Here Come the Rains</div>
<div class="t" style="left:11px;top:172px;letter-spacing:-0.44px">Permanence</div>
<div class="t" style="left:11px;top:185px;letter-spacing:0.00px">4.8.05</div>
<div class="t" style="left:11px;top:198px;letter-spacing:-0.15px">The Polygraph Cheaters</div>
<div class="t" style="left:11px;top:211px;letter-spacing:-0.23px">Deliver Me</div>
<div class="t" style="left:11px;top:224px;letter-spacing:-0.12px">The Absentee Ballot</div>
<div class="t" style="left:11px;top:237px;letter-spacing:-0.18px">Broken Teeth</div>
<div class="a" style="left:514px;top:132px;width:17px;height:115px;background:linear-gradient(90deg,#f3f1ec,#fdfdfb)"></div>
<div class="sbtn" style="left:514px;top:132px;width:17px;height:16px"><svg style="left:3px;top:4px" width="9" height="6" viewBox="0 0 9 6"><path d="M1 5 L4.500 1.500 L8 5" fill="none" stroke="#4d6185" stroke-width="2"/></svg></div>
<div class="sbtn" style="left:514px;top:231px;width:17px;height:16px"><svg style="left:3px;top:5px" width="9" height="6" viewBox="0 0 9 6"><path d="M1 1 L4.500 4.500 L8 1" fill="none" stroke="#4d6185" stroke-width="2"/></svg></div>
<div class="thumb" style="left:514px;top:149px;width:17px;height:50px;background:linear-gradient(90deg,#c9d8fc 0%,#c2d3fc 50%,#b9ccf8 100%)"><div class="a" style="left:5px;top:20px;width:6px;height:7px;background:repeating-linear-gradient(180deg,#eef4fe 0 1px,#8ca6dc 1px 2px)"></div></div>
<div class="cb" style="left:12px;top:257px"><svg width="9" height="9" viewBox="0 0 9 9"><path d="M1 3.500 L3.500 6.500 L8 1.500" fill="none" stroke="#21a121" stroke-width="2"/></svg></div>
<div class="t" style="left:29px;top:258px;letter-spacing:0.00px">Song titles</div>
<div class="cb" style="left:12px;top:281px"><svg width="9" height="9" viewBox="0 0 9 9"><path d="M1 3.500 L3.500 6.500 L8 1.500" fill="none" stroke="#21a121" stroke-width="2"/></svg></div>
<div class="t" style="left:29px;top:282px;letter-spacing:-0.32px">Track numbers</div>
<div class="cb" style="left:12px;top:310px"><svg width="9" height="9" viewBox="0 0 9 9"><path d="M1 3.500 L3.500 6.500 L8 1.500" fill="none" stroke="#21a121" stroke-width="2"/></svg></div>
<div class="t" style="left:29px;top:311px;letter-spacing:0.25px">Artist:</div>
<div class="cb" style="left:12px;top:334px"><svg width="9" height="9" viewBox="0 0 9 9"><path d="M1 3.500 L3.500 6.500 L8 1.500" fill="none" stroke="#21a121" stroke-width="2"/></svg></div>
<div class="t" style="left:29px;top:335px;letter-spacing:-0.18px">Album:</div>
<div class="cb" style="left:284px;top:310px"><svg width="9" height="9" viewBox="0 0 9 9"><path d="M1 3.500 L3.500 6.500 L8 1.500" fill="none" stroke="#21a121" stroke-width="2"/></svg></div>
<div class="t" style="left:301px;top:311px;letter-spacing:-0.06px">Year:</div>
<div class="cb" style="left:284px;top:334px"><svg width="9" height="9" viewBox="0 0 9 9"><path d="M1 3.500 L3.500 6.500 L8 1.500" fill="none" stroke="#21a121" stroke-width="2"/></svg></div>
<div class="t" style="left:301px;top:335px;letter-spacing:-0.15px">Genre:</div>
<div class="cb" style="left:12px;top:366px"></div>
<div class="t" style="left:29px;top:367px;letter-spacing:-0.28px">Compilation disc</div>
<div class="cb" style="left:12px;top:390px"></div>
<div class="t" style="left:29px;top:391px;letter-spacing:-0.11px">Do a Unicode UTF8 request (may give incorrect results for national albums)</div>
<div class="inp" style="left:76px;top:308px;width:185px;height:21px"></div><div class="t" style="left:79px;top:312px;letter-spacing:-0.33px">This is Hell</div>
<div class="inp" style="left:76px;top:332px;width:185px;height:21px"></div><div class="t" style="left:79px;top:336px;letter-spacing:-0.23px">Sundowning</div>
<div class="inp" style="left:348px;top:306px;width:57px;height:21px"></div><div class="t" style="left:351px;top:310px;letter-spacing:-0.03px">2006</div>
<div class="inp" style="left:348px;top:330px;width:145px;height:21px"></div><div class="t" style="left:351px;top:334px;letter-spacing:-0.26px">Hardcore</div>
<div class="sbtn" style="left:475px;top:332px;width:16px;height:17px"><svg style="left:3px;top:5px" width="9" height="6" viewBox="0 0 9 6"><path d="M1 1 L4.500 4.500 L8 1" fill="none" stroke="#4d6185" stroke-width="2"/></svg></div>
<div class="a" style="left:4px;top:414px;width:532px;height:1px;background:#aca899"></div><div class="a" style="left:4px;top:415px;width:532px;height:1px;background:#fff"></div>
<div class="btn" style="left:11px;top:426px;width:95px;height:23px;letter-spacing:-0.43px"><svg style="vertical-align:-3px;margin-right:4px" width="16" height="16" viewBox="0 0 16 16"><rect x="1.500" y="1" width="12.500" height="12" rx="1.500" fill="#fff" stroke="#222" stroke-width="1.400"/><text x="4" y="11.500" font-size="12" font-weight="bold" fill="#26268c" font-family="Liberation Sans, sans-serif">?</text><path d="M8.500 13 l4 3 l.5-3.500 z" fill="#f4e440" stroke="#443" stroke-width=".7"/></svg><u>H</u>elp</div>
<div class="btn" style="left:120px;top:426px;width:95px;height:23px;letter-spacing:-0.09px"><u>W</u>rite Tags</div>
<div class="btn" style="left:224px;top:426px;width:95px;height:23px;letter-spacing:-0.04px"><u>G</u>et Titles</div>
<div class="btn" style="left:328px;top:426px;width:95px;height:23px;letter-spacing:-0.14px">Get <u>A</u>lbum</div>
<div class="btn" style="left:432px;top:426px;width:95px;height:23px;letter-spacing:-0.41px"><u>C</u>ancel</div>
<div class="a" style="left:4px;top:457px;width:532px;height:18px;background:#f0eee5"></div>
<div class="a" style="left:4px;top:30px;width:532px;height:1px;background:#f7f6f0"></div>
<div class="a" style="left:4px;top:456px;width:532px;height:1px;background:#c5c2b2"></div><div class="a" style="left:4px;top:457px;width:532px;height:1px;background:#f8f7f2"></div>
<div class="t" style="left:6px;top:461px;letter-spacing:0.04px">940 bytes loaded.</div>
<div class="a" style="left:252px;top:459px;width:1px;height:15px;background:#c5c2b2"></div><div class="a" style="left:253px;top:459px;width:1px;height:15px;background:#fff"></div>
<div class="a" style="left:452px;top:459px;width:1px;height:15px;background:#c5c2b2"></div><div class="a" style="left:453px;top:459px;width:1px;height:15px;background:#fff"></div>
<svg class="a" style="left:523px;top:462px" width="12" height="12" viewBox="0 0 12 12"><g fill="#b8b4a4"><rect x="9" y="1" width="2" height="2"/><rect x="5" y="5" width="2" height="2"/><rect x="9" y="5" width="2" height="2"/><rect x="1" y="9" width="2" height="2"/><rect x="5" y="9" width="2" height="2"/><rect x="9" y="9" width="2" height="2"/></g></svg>
</div>
</div></body></html>
